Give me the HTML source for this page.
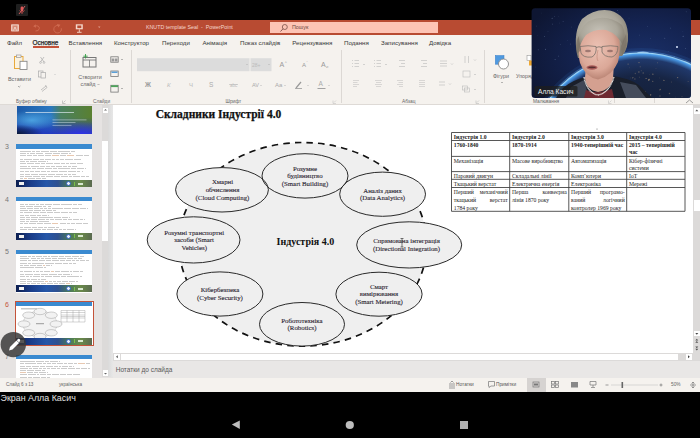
<!DOCTYPE html>
<html><head><meta charset="utf-8">
<style>
*{margin:0;padding:0;box-sizing:border-box}
html,body{width:700px;height:438px;overflow:hidden;background:#000}
body{position:relative;font-family:"Liberation Sans",sans-serif}
.a{position:absolute;white-space:nowrap}
.sans{font-family:"Liberation Sans",sans-serif}
.serif{font-family:"Liberation Serif",serif}
.tab{position:absolute;top:39px;font-size:6.15px;color:#383838;line-height:7px}
.lbl{position:absolute;top:99px;font-size:4.8px;color:#666;line-height:6px}
.rt{position:absolute;font-size:5.4px;color:#666;line-height:6px;text-align:center}
.sep{position:absolute;top:50px;width:1px;height:53px;background:#dcd8d4}
.thumb{position:absolute;left:16px;width:76px;height:43px;background:#fff}
.num{position:absolute;left:5px;font-size:7px;color:#666}
.el text{font-family:"Liberation Serif",serif;font-size:6.8px;fill:#333;text-anchor:middle}
td{border:0.9px solid #555;vertical-align:top;padding:0 1.5px;font-family:"Liberation Serif",serif;font-size:5.6px;line-height:7.5px;color:#222}
</style></head>
<body>
<!-- top black bar -->
<div class="a" style="left:16px;top:4px;width:12px;height:12px;background:#1f1f1f;border-radius:1px"></div>
<svg class="a" style="left:16px;top:4px" width="12" height="12" viewBox="0 0 12 12">
  <rect x="4.6" y="2.5" width="2.8" height="5" rx="1.4" fill="#e05a5a"/>
  <path d="M3.5 6.5 Q6 10 8.5 6.5 M6 8.5 V10" stroke="#d05050" stroke-width="0.8" fill="none"/>
  <line x1="3" y1="10" x2="9" y2="2" stroke="#e06060" stroke-width="0.9"/>
</svg>

<!-- title bar -->
<div class="a" style="left:0;top:20px;width:700px;height:14.5px;background:#b84b32"></div>
<svg class="a" style="left:0;top:20px" width="140" height="15" viewBox="0 0 140 15">
  <rect x="11" y="4.3" width="8" height="7.2" rx="0.8" fill="#ecc8bc"/>
  <rect x="12.5" y="5.5" width="5" height="5" fill="#d88a74"/>
  <path d="M13.5 10.5 L15 7 L16.5 10.5" stroke="#f4e0d8" stroke-width="0.8" fill="none"/>
  <path d="M34.5 6 Q39.5 5 39.3 8.5 Q39 11.3 35.5 11" stroke="#cf6a50" stroke-width="1" fill="none"/>
  <path d="M33.2 6.3 L35.8 4.2 L36 7.8 Z" fill="#cf6a50"/>
  <path d="M58.5 5.5 A3.8 3.8 0 1 0 61.3 8.3" stroke="#cf6a50" stroke-width="1" fill="none"/>
  <path d="M57 4 L60.5 4.8 L58.3 7.5 Z" fill="#cf6a50"/>
  <rect x="75.8" y="4.3" width="7" height="5" fill="#f4d8cc"/>
  <rect x="77.3" y="5.5" width="4" height="2.6" fill="#b84b32"/>
  <path d="M79.3 9.3 V12 M77 12.3 H81.6" stroke="#f4d8cc" stroke-width="0.9"/>
  <path d="M98 6.5 L100.5 6.5 L99.25 8 Z" fill="#e0a090"/>
</svg>
<div class="a" style="left:146px;top:23.8px;font-size:5.3px;color:#f5d6cc;line-height:6px">KNUTD template Seal&nbsp; -&nbsp; PowerPoint</div>
<div class="a" style="left:270px;top:22px;width:168px;height:11.3px;background:#fdc4b5"></div>
<svg class="a" style="left:279px;top:23px" width="10" height="10" viewBox="0 0 10 10">
  <circle cx="5.8" cy="4" r="2.5" fill="none" stroke="#7a5048" stroke-width="0.8"/>
  <line x1="4" y1="5.8" x2="1.5" y2="8.5" stroke="#7a5048" stroke-width="0.9"/>
</svg>
<div class="a" style="left:292px;top:24.3px;font-size:5.4px;color:#6a4a44;line-height:7px">Пошук</div>

<!-- ribbon -->
<div class="a" style="left:0;top:34.5px;width:700px;height:70px;background:#f5f2ee;border-bottom:0.8px solid #dedad6"></div>
<div class="tab" style="left:7px">Файл</div>
<div class="tab" style="left:32.5px;color:#2a2a2a;font-size:6.4px;-webkit-text-stroke:0.25px #2a2a2a">Основне</div>
<div class="a" style="left:32.5px;top:46.3px;width:26px;height:1.4px;background:#c4533a"></div>
<div class="tab" style="left:68.6px">Вставлення</div>
<div class="tab" style="left:114px">Конструктор</div>
<div class="tab" style="left:162px">Переходи</div>
<div class="tab" style="left:202.5px">Анімація</div>
<div class="tab" style="left:240px">Показ слайдів</div>
<div class="tab" style="left:292.3px">Рецензування</div>
<div class="tab" style="left:344px">Подання</div>
<div class="tab" style="left:381px">Записування</div>
<div class="tab" style="left:429px">Довідка</div>

<div class="sep" style="left:69.5px"></div>
<div class="sep" style="left:131.4px"></div>
<div class="sep" style="left:340.7px"></div>
<div class="sep" style="left:483.5px"></div>
<div class="sep" style="left:614.3px"></div>
<div class="sep" style="left:653.7px"></div>

<svg class="a" style="left:0;top:48px" width="700" height="57" viewBox="0 48 700 57">
  <!-- paste -->
  <rect x="14.5" y="56.5" width="8.5" height="12" fill="#fbf3e0" stroke="#e8a93c" stroke-width="1"/>
  <rect x="16.5" y="55" width="4.5" height="2.5" fill="#f5f2ee" stroke="#999" stroke-width="0.7"/>
  <rect x="20" y="61.3" width="7" height="8.2" fill="#fff" stroke="#888" stroke-width="0.9"/>
  <path d="M18 86 L19.2 87.2 L20.4 86" stroke="#888" stroke-width="0.7" fill="none"/>
  <!-- cut -->
  <path d="M40.5 57 L44 62 M44 57 L40.5 62" stroke="#aaa" stroke-width="0.7"/>
  <circle cx="40.5" cy="62.5" r="0.9" fill="none" stroke="#aaa" stroke-width="0.6"/>
  <circle cx="44" cy="62.5" r="0.9" fill="none" stroke="#aaa" stroke-width="0.6"/>
  <!-- copy -->
  <rect x="38.5" y="71" width="4.5" height="6" fill="none" stroke="#aaa" stroke-width="0.7"/>
  <rect x="41" y="72.5" width="4.5" height="5.5" fill="#f5f2ee" stroke="#aaa" stroke-width="0.7"/>
  <path d="M54 74 L55 75 L56 74" stroke="#ccc" stroke-width="0.6" fill="none"/>
  <!-- painter -->
  <path d="M41 90 L46 86 M42 91.5 L47 87.5 L45.5 85" stroke="#aaa" stroke-width="0.7" fill="none"/>
  <!-- launcher -->
  <path d="M62.5 100.5 V103.5 H65.5 M63.5 102.5 L65.5 100.5" stroke="#999" stroke-width="0.5" fill="none"/>
  <!-- new slide -->
  <rect x="83" y="57.5" width="13" height="9.5" fill="none" stroke="#777" stroke-width="1"/>
  <line x1="83" y1="60" x2="96" y2="60" stroke="#777" stroke-width="0.9"/>
  <line x1="89.5" y1="60" x2="89.5" y2="67" stroke="#777" stroke-width="0.8"/>
  <path d="M85.5 54 V58.5 M83.3 56.2 H87.7" stroke="#39a04a" stroke-width="0.9"/>
  <path d="M97.5 84 L98.5 85 L99.5 84" stroke="#888" stroke-width="0.6" fill="none"/>
  <!-- layout -->
  <rect x="110.8" y="56.8" width="7.4" height="5.4" fill="none" stroke="#777" stroke-width="0.8"/>
  <rect x="111.6" y="58.5" width="2.8" height="3" fill="#999"/><rect x="115" y="58.5" width="2.5" height="3" fill="#999"/>
  <path d="M121 59 L122 60 L123 59" stroke="#888" stroke-width="0.6" fill="none"/>
  <!-- reset -->
  <rect x="110.8" y="71" width="7.4" height="5.4" fill="none" stroke="#777" stroke-width="0.8"/>
  <rect x="111.5" y="71.5" width="6" height="1.5" fill="#5aa0d8"/>
  <!-- section -->
  <rect x="110.8" y="85.3" width="7.4" height="6.8" fill="none" stroke="#777" stroke-width="0.8"/>
  <rect x="111" y="85.3" width="7" height="1.8" fill="#4da35a"/>
  <path d="M121 88 L122 89 L123 88" stroke="#888" stroke-width="0.6" fill="none"/>
  <!-- font box -->
  <rect x="137" y="58.2" width="112.5" height="13" fill="#dcdcdc"/>
  <rect x="250.5" y="58.2" width="21" height="13" fill="#dcdcdc"/>
  <path d="M246 64 L247 65 L248 64 M268 64 L269 65 L270 64" stroke="#bbb" stroke-width="0.6" fill="none"/>
  <text x="252" y="66.5" font-size="5" fill="#bbb" font-family="Liberation Sans">28+</text>
  <g font-family="Liberation Sans" fill="#999">
  <text x="279.5" y="67" font-size="7">A</text><text x="285" y="63.5" font-size="3.5">^</text>
  <text x="302" y="67" font-size="6">A</text><text x="306.5" y="63.5" font-size="3.5">ˇ</text>
  <text x="321" y="67" font-size="7">A</text><text x="325.5" y="68" font-size="5">ℴ</text>
  <text x="145" y="86.5" font-size="6.5" font-weight="bold" fill="#999">Ж</text>
  <text x="167" y="86.5" font-size="6" font-style="italic" fill="#bbb">К</text>
  <text x="189" y="86.5" font-size="6" fill="#bbb">Ч</text>
  <text x="209" y="86.5" font-size="6.5" fill="#aaa">S</text>
  <text x="230" y="86.5" font-size="4.5" fill="#bbb">abc</text>
  <text x="252" y="86.5" font-size="5.5" fill="#aaa">AV</text>
  <text x="275" y="87" font-size="6" fill="#aaa">Aa</text>
  <text x="318.5" y="86" font-size="6.5" fill="#aaa">A</text>
  </g>
  <line x1="229" y1="84.5" x2="238" y2="84.5" stroke="#bbb" stroke-width="0.6"/>
  <path d="M296 88 L301 82" stroke="#999" stroke-width="1.2"/>
  <line x1="295" y1="88.5" x2="302" y2="88.5" stroke="#999" stroke-width="0.8"/>
  <line x1="317.5" y1="88.5" x2="325.5" y2="88.5" stroke="#999" stroke-width="0.9"/>
  <path d="M260 85 L261 86 L262 85 M284 85 L285 86 L286 85 M307 85 L308 86 L309 85 M328 85 L329 86 L330 85" stroke="#bbb" stroke-width="0.5" fill="none"/>
  <path d="M333 100.5 V103.5 H336 M334 102.5 L336 100.5" stroke="#bbb" stroke-width="0.5" fill="none"/>
  <!-- paragraph -->
  <g stroke="#bbb" stroke-width="0.6" fill="none">
   <path d="M352 60.5h1 M354.5 60.5h4.5 M352 63.5h1 M354.5 63.5h4.5 M352 66.5h1 M354.5 66.5h4.5"/>
   <path d="M374 60.5h1 M376.5 60.5h4.5 M374 63.5h1 M376.5 63.5h4.5 M374 66.5h1 M376.5 66.5h4.5"/>
   <path d="M399 60.5h6 M401 63.5h4 M399 66.5h6"/>
   <path d="M421 60.5h6 M423 63.5h4 M421 66.5h6"/>
   <path d="M353 80.5h6 M353 82.5h4.5 M353 84.5h6 M353 86.5h4" stroke-width="0.5"/>
   <path d="M375 80.5h7 M376 82.5h5 M375 84.5h7 M376 86.5h5" stroke-width="0.5"/>
   <path d="M397 80.5h6 M398.5 82.5h4.5 M397 84.5h6 M399 86.5h4" stroke-width="0.5"/>
   <path d="M419 80.5h6 M419 82.5h6 M419 84.5h6 M419 86.5h6" stroke-width="0.5"/>
   <path d="M363 64 l1 1 l1 -1 M385 64 l1 1 l1 -1"/>
   <path d="M440 61h7 M440 63.5h7 M440 66h7 M451 63.5 l1 1 l1 -1"/>
   <path d="M439 82h6 M439 85h6 M449 83.5 l1 1 l1 -1"/>
   <path d="M465 56v7 M468.5 56v7 M474 59.5 l1 1 l1 -1"/>
   <rect x="463" y="71" width="7" height="6"/><path d="M474 74 l1 1 l1 -1"/>
   <rect x="462.5" y="86" width="5" height="4"/><rect x="464.5" y="88" width="5" height="4"/><path d="M474 89 l1 1 l1 -1"/>
   <path d="M476 100.5 V103.5 H479 M477 102.5 L479 100.5"/>
  </g>
  <!-- shapes -->
  <rect x="495.3" y="55.5" width="8.7" height="8.7" fill="#4f9ae0" stroke="#3a7fc8" stroke-width="0.5"/>
  <circle cx="503.5" cy="64" r="5" fill="#fff" stroke="#888" stroke-width="0.9"/>
  <path d="M501 82 L502 83 L503 82" stroke="#888" stroke-width="0.6" fill="none"/>
  <rect x="527" y="55.5" width="4" height="5" fill="#fff" stroke="#999" stroke-width="0.6"/>
  <rect x="529" y="60.5" width="3" height="5" fill="#f0a830"/>
  <path d="M608.5 100.5 V103.5 H611.5 M609.5 102.5 L611.5 100.5" stroke="#bbb" stroke-width="0.5" fill="none"/>
  <path d="M686 103 L689.5 100 L693 103" stroke="#777" stroke-width="0.7" fill="none"/>
</svg>
<div class="rt" style="left:8px;top:76px;width:23px;text-align:left">Вставити</div>
<div class="rt" style="left:76px;top:73.5px;width:28px">Створити</div>
<div class="rt" style="left:76px;top:80.5px;width:24px">слайд</div>
<div class="rt" style="left:493px;top:72.5px;width:17px;text-align:left">Фігури</div>
<div class="rt" style="left:516px;top:72.5px;text-align:left">Упорядкувати</div>
<div class="lbl" style="left:16px">Буфер обміну</div>
<div class="lbl" style="left:93px">Слайди</div>
<div class="lbl" style="left:225.5px">Шрифт</div>
<div class="lbl" style="left:402px">Абзац</div>
<div class="lbl" style="left:533px">Малювання</div>

<!-- left thumbnail panel -->
<div class="a" style="left:0;top:104.5px;width:113px;height:273px;background:#e6e3e2"></div>
<div class="a" style="left:101.5px;top:105px;width:7.5px;height:272px;background:#dcdad9"></div>
<div class="a" style="left:103px;top:107.5px;width:5px;height:5px;background:#fff"></div>
<div class="a" style="left:101.5px;top:141px;width:6.5px;height:99.5px;background:#fff"></div>
<div class="a" style="left:103px;top:370px;width:5px;height:6px;background:#fff"></div>
<svg class="a" style="left:101px;top:105px" width="8" height="272" viewBox="0 0 8 272">
  <path d="M3 5.5 L4.5 4 L6 5.5Z" fill="#666"/>
  <path d="M3 268 L4.5 269.5 L6 268Z" fill="#666"/>
</svg>
<div class="a" style="left:108px;top:105px;width:5.5px;height:272px;background:linear-gradient(90deg,#dadada,#e2e2e2 50%,#e9e9e9)"></div>

<!-- thumbnail 2 (partial) -->
<svg class="a" style="left:16.5px;top:106px" width="75.2" height="28.4" viewBox="0 0 75.2 29.4" preserveAspectRatio="none">
<defs>
<linearGradient id="t2a" x1="0" y1="0" x2="1" y2="0"><stop offset="0" stop-color="#1c5aa8"/><stop offset="0.45" stop-color="#2a78c0"/><stop offset="0.58" stop-color="#4a8060"/><stop offset="1" stop-color="#5a8030"/></linearGradient>
<radialGradient id="t2b" cx="0.2" cy="0.5" r="0.35"><stop offset="0" stop-color="#4aa0e0"/><stop offset="1" stop-color="#4aa0e0" stop-opacity="0"/></radialGradient>
<radialGradient id="t2c" cx="0.85" cy="1" r="0.45"><stop offset="0" stop-color="#3030e8"/><stop offset="1" stop-color="#3040d0" stop-opacity="0"/></radialGradient>
<radialGradient id="t2d" cx="0" cy="1" r="0.35"><stop offset="0" stop-color="#081830"/><stop offset="1" stop-color="#081830" stop-opacity="0"/></radialGradient>
<linearGradient id="t2e" x1="0" y1="0" x2="0" y2="1"><stop offset="0.4" stop-color="#2030b0" stop-opacity="0"/><stop offset="1" stop-color="#2030c0" stop-opacity="0.9"/></linearGradient>
</defs>
<rect width="75.2" height="29.4" fill="url(#t2a)"/>
<rect width="75.2" height="29.4" fill="url(#t2e)"/>
<rect width="75.2" height="29.4" fill="url(#t2b)"/>
<rect width="75.2" height="29.4" fill="url(#t2c)"/>
<rect width="75.2" height="29.4" fill="url(#t2d)"/>
<rect x="8.5" y="6.2" width="48.5" height="0.9" fill="#e8f0f8" opacity="0.75"/>
<rect x="35.5" y="14" width="34" height="0.8" fill="#e8f0f8" opacity="0.6"/>
<rect x="35.5" y="16.8" width="23" height="0.8" fill="#e8f0f8" opacity="0.55"/>
<rect x="35.5" y="19.6" width="19" height="0.8" fill="#e8f0f8" opacity="0.55"/>
</svg>
<div class="a" style="left:0;top:104.5px;width:101px;height:273px;overflow:hidden"><div class="a" style="left:0;top:-104.5px;width:101px;height:480px">
<div class="num" style="top:142.9px;color:#777">3</div>
<div class="a" style="left:16.2px;top:144.4px;width:75.8px;height:43px;background:#fff"></div>
<div class="a" style="left:16.2px;top:144.4px;width:75.8px;height:4.3px;background:#3a8ad0"></div>
<div class="a" style="left:20.0px;top:150.9px;width:4.5px;height:1px;background:#cacaca"></div>
<div class="a" style="left:25.4px;top:150.9px;width:5.9px;height:1px;background:#cacaca"></div>
<div class="a" style="left:32.3px;top:150.9px;width:2.6px;height:1px;background:#cacaca"></div>
<div class="a" style="left:35.7px;top:150.9px;width:3.9px;height:1px;background:#cacaca"></div>
<div class="a" style="left:40.6px;top:150.9px;width:8.0px;height:1px;background:#cacaca"></div>
<div class="a" style="left:49.5px;top:150.9px;width:7.1px;height:1px;background:#cacaca"></div>
<div class="a" style="left:57.5px;top:150.9px;width:6.0px;height:1px;background:#cacaca"></div>
<div class="a" style="left:64.4px;top:150.9px;width:6.0px;height:1px;background:#cacaca"></div>
<div class="a" style="left:71.3px;top:150.9px;width:3.5px;height:1px;background:#cacaca"></div>
<div class="a" style="left:20.0px;top:153.1px;width:5.8px;height:1px;background:#cacaca"></div>
<div class="a" style="left:26.7px;top:153.1px;width:2.7px;height:1px;background:#cacaca"></div>
<div class="a" style="left:30.2px;top:153.1px;width:5.1px;height:1px;background:#cacaca"></div>
<div class="a" style="left:36.2px;top:153.1px;width:7.3px;height:1px;background:#cacaca"></div>
<div class="a" style="left:44.5px;top:153.1px;width:7.6px;height:1px;background:#cacaca"></div>
<div class="a" style="left:52.9px;top:153.1px;width:6.9px;height:1px;background:#cacaca"></div>
<div class="a" style="left:60.7px;top:153.1px;width:7.6px;height:1px;background:#cacaca"></div>
<div class="a" style="left:69.3px;top:153.1px;width:2.0px;height:1px;background:#cacaca"></div>
<div class="a" style="left:20.0px;top:155.3px;width:5.9px;height:1px;background:#cacaca"></div>
<div class="a" style="left:26.8px;top:155.3px;width:5.3px;height:1px;background:#cacaca"></div>
<div class="a" style="left:33.0px;top:155.3px;width:4.4px;height:1px;background:#cacaca"></div>
<div class="a" style="left:38.4px;top:155.3px;width:5.7px;height:1px;background:#cacaca"></div>
<div class="a" style="left:45.0px;top:155.3px;width:6.3px;height:1px;background:#cacaca"></div>
<div class="a" style="left:52.1px;top:155.3px;width:7.2px;height:1px;background:#e8c8b0"></div>
<div class="a" style="left:60.2px;top:155.3px;width:6.2px;height:1px;background:#cacaca"></div>
<div class="a" style="left:67.3px;top:155.3px;width:7.2px;height:1px;background:#e8c8b0"></div>
<div class="a" style="left:75.5px;top:155.3px;width:7.5px;height:1px;background:#cacaca"></div>
<div class="a" style="left:83.8px;top:155.3px;width:5.5px;height:1px;background:#cacaca"></div>
<div class="a" style="left:20.0px;top:158.9px;width:2.8px;height:1px;background:#cacaca"></div>
<div class="a" style="left:23.7px;top:158.9px;width:7.9px;height:1px;background:#cacaca"></div>
<div class="a" style="left:32.6px;top:158.9px;width:6.9px;height:1px;background:#cacaca"></div>
<div class="a" style="left:40.4px;top:158.9px;width:3.3px;height:1px;background:#cacaca"></div>
<div class="a" style="left:44.6px;top:158.9px;width:6.7px;height:1px;background:#cacaca"></div>
<div class="a" style="left:52.3px;top:158.9px;width:2.7px;height:1px;background:#cacaca"></div>
<div class="a" style="left:55.9px;top:158.9px;width:2.7px;height:1px;background:#cacaca"></div>
<div class="a" style="left:59.5px;top:158.9px;width:4.3px;height:1px;background:#cacaca"></div>
<div class="a" style="left:64.8px;top:158.9px;width:7.9px;height:1px;background:#cacaca"></div>
<div class="a" style="left:73.6px;top:158.9px;width:7.9px;height:1px;background:#cacaca"></div>
<div class="a" style="left:20.0px;top:161.1px;width:4.7px;height:1px;background:#cacaca"></div>
<div class="a" style="left:25.6px;top:161.1px;width:3.4px;height:1px;background:#cacaca"></div>
<div class="a" style="left:29.9px;top:161.1px;width:7.3px;height:1px;background:#cacaca"></div>
<div class="a" style="left:38.1px;top:161.1px;width:7.8px;height:1px;background:#cacaca"></div>
<div class="a" style="left:46.7px;top:161.1px;width:1.2px;height:1px;background:#cacaca"></div>
<div class="a" style="left:20.0px;top:163.3px;width:5.6px;height:1px;background:#cacaca"></div>
<div class="a" style="left:26.5px;top:163.3px;width:7.7px;height:1px;background:#cacaca"></div>
<div class="a" style="left:35.0px;top:163.3px;width:4.9px;height:1px;background:#cacaca"></div>
<div class="a" style="left:40.8px;top:163.3px;width:3.8px;height:1px;background:#cacaca"></div>
<div class="a" style="left:45.5px;top:163.3px;width:7.9px;height:1px;background:#cacaca"></div>
<div class="a" style="left:54.3px;top:163.3px;width:5.5px;height:1px;background:#cacaca"></div>
<div class="a" style="left:60.7px;top:163.3px;width:4.8px;height:1px;background:#cacaca"></div>
<div class="a" style="left:66.4px;top:163.3px;width:2.6px;height:1px;background:#cacaca"></div>
<div class="a" style="left:69.9px;top:163.3px;width:6.0px;height:1px;background:#cacaca"></div>
<div class="a" style="left:76.8px;top:163.3px;width:6.0px;height:1px;background:#cacaca"></div>
<div class="a" style="left:20.0px;top:165.5px;width:6.6px;height:1px;background:#cacaca"></div>
<div class="a" style="left:27.5px;top:165.5px;width:2.8px;height:1px;background:#cacaca"></div>
<div class="a" style="left:31.2px;top:165.5px;width:7.8px;height:1px;background:#cacaca"></div>
<div class="a" style="left:39.9px;top:165.5px;width:5.0px;height:1px;background:#cacaca"></div>
<div class="a" style="left:45.8px;top:165.5px;width:4.3px;height:1px;background:#cacaca"></div>
<div class="a" style="left:51.0px;top:165.5px;width:4.2px;height:1px;background:#cacaca"></div>
<div class="a" style="left:56.1px;top:165.5px;width:5.8px;height:1px;background:#cacaca"></div>
<div class="a" style="left:62.8px;top:165.5px;width:4.6px;height:1px;background:#cacaca"></div>
<div class="a" style="left:68.2px;top:165.5px;width:2.6px;height:1px;background:#cacaca"></div>
<div class="a" style="left:71.8px;top:165.5px;width:5.3px;height:1px;background:#cacaca"></div>
<div class="a" style="left:20.0px;top:167.7px;width:3.5px;height:1px;background:#cacaca"></div>
<div class="a" style="left:24.4px;top:167.7px;width:6.3px;height:1px;background:#cacaca"></div>
<div class="a" style="left:31.7px;top:167.7px;width:4.3px;height:1px;background:#cacaca"></div>
<div class="a" style="left:36.8px;top:167.7px;width:7.1px;height:1px;background:#cacaca"></div>
<div class="a" style="left:44.8px;top:167.7px;width:7.2px;height:1px;background:#cacaca"></div>
<div class="a" style="left:52.9px;top:167.7px;width:4.4px;height:1px;background:#cacaca"></div>
<div class="a" style="left:58.2px;top:167.7px;width:7.4px;height:1px;background:#cacaca"></div>
<div class="a" style="left:66.4px;top:167.7px;width:3.7px;height:1px;background:#cacaca"></div>
<div class="a" style="left:71.1px;top:167.7px;width:5.4px;height:1px;background:#cacaca"></div>
<div class="a" style="left:77.4px;top:167.7px;width:6.9px;height:1px;background:#cacaca"></div>
<div class="a" style="left:85.2px;top:167.7px;width:0.8px;height:1px;background:#cacaca"></div>
<div class="a" style="left:20.0px;top:171.3px;width:4.4px;height:1px;background:#cacaca"></div>
<div class="a" style="left:25.3px;top:171.3px;width:4.1px;height:1px;background:#cacaca"></div>
<div class="a" style="left:30.3px;top:171.3px;width:4.0px;height:1px;background:#cacaca"></div>
<div class="a" style="left:35.2px;top:171.3px;width:4.8px;height:1px;background:#cacaca"></div>
<div class="a" style="left:40.9px;top:171.3px;width:4.8px;height:1px;background:#cacaca"></div>
<div class="a" style="left:46.5px;top:171.3px;width:3.4px;height:1px;background:#cacaca"></div>
<div class="a" style="left:50.8px;top:171.3px;width:7.7px;height:1px;background:#cacaca"></div>
<div class="a" style="left:59.4px;top:171.3px;width:7.9px;height:1px;background:#cacaca"></div>
<div class="a" style="left:68.2px;top:171.3px;width:7.7px;height:1px;background:#cacaca"></div>
<div class="a" style="left:76.8px;top:171.3px;width:3.7px;height:1px;background:#cacaca"></div>
<div class="a" style="left:81.5px;top:171.3px;width:1.4px;height:1px;background:#cacaca"></div>
<div class="a" style="left:20.0px;top:173.5px;width:3.8px;height:1px;background:#cacaca"></div>
<div class="a" style="left:24.7px;top:173.5px;width:5.7px;height:1px;background:#cacaca"></div>
<div class="a" style="left:31.3px;top:173.5px;width:7.0px;height:1px;background:#cacaca"></div>
<div class="a" style="left:39.1px;top:173.5px;width:7.5px;height:1px;background:#cacaca"></div>
<div class="a" style="left:47.5px;top:173.5px;width:7.6px;height:1px;background:#cacaca"></div>
<div class="a" style="left:56.0px;top:173.5px;width:7.4px;height:1px;background:#cacaca"></div>
<div class="a" style="left:64.3px;top:173.5px;width:2.6px;height:1px;background:#cacaca"></div>
<div class="a" style="left:67.8px;top:173.5px;width:3.4px;height:1px;background:#cacaca"></div>
<div class="a" style="left:72.2px;top:173.5px;width:3.6px;height:1px;background:#cacaca"></div>
<div class="a" style="left:20.0px;top:175.7px;width:4.4px;height:1px;background:#cacaca"></div>
<div class="a" style="left:25.3px;top:175.7px;width:7.2px;height:1px;background:#cacaca"></div>
<div class="a" style="left:33.4px;top:175.7px;width:6.8px;height:1px;background:#cacaca"></div>
<div class="a" style="left:41.1px;top:175.7px;width:3.6px;height:1px;background:#cacaca"></div>
<div class="a" style="left:45.6px;top:175.7px;width:7.0px;height:1px;background:#cacaca"></div>
<div class="a" style="left:53.5px;top:175.7px;width:6.9px;height:1px;background:#cacaca"></div>
<div class="a" style="left:61.3px;top:175.7px;width:6.9px;height:1px;background:#cacaca"></div>
<div class="a" style="left:69.1px;top:175.7px;width:2.5px;height:1px;background:#cacaca"></div>
<div class="a" style="left:72.5px;top:175.7px;width:7.2px;height:1px;background:#cacaca"></div>
<div class="a" style="left:80.7px;top:175.7px;width:4.0px;height:1px;background:#cacaca"></div>
<div class="a" style="left:85.6px;top:175.7px;width:3.2px;height:1px;background:#cacaca"></div>
<div class="a" style="left:20.0px;top:177.9px;width:3.2px;height:1px;background:#cacaca"></div>
<div class="a" style="left:24.1px;top:177.9px;width:2.9px;height:1px;background:#e8c8b0"></div>
<div class="a" style="left:27.9px;top:177.9px;width:7.2px;height:1px;background:#cacaca"></div>
<div class="a" style="left:36.0px;top:177.9px;width:5.3px;height:1px;background:#cacaca"></div>
<div class="a" style="left:42.1px;top:177.9px;width:3.7px;height:1px;background:#cacaca"></div>
<div class="a" style="left:16.2px;top:180.2px;width:75.8px;height:7.2px;background:linear-gradient(90deg,#0d1f50 0%,#1a3d8a 20%,#2556a8 40%,#2e5090 55%,#4a7a5a 70%,#6a8a4a 85%,#5a6a50 100%)"></div><div class="a" style="left:18.5px;top:182.2px;width:5.5px;height:3px;background:#f0f0f0"></div><div class="a" style="left:66px;top:181.2px;width:5px;height:5px;border-radius:50%;background:#e8eef8;border:1px solid #3060c0"></div><div class="a" style="left:73.5px;top:181.7px;width:1.5px;height:4px;background:#7ac04a"></div><div class="a" style="left:78px;top:182.7px;width:5px;height:2px;background:#d8e8d0"></div>
<div class="num" style="top:195.5px;color:#777">4</div>
<div class="a" style="left:16.2px;top:197.0px;width:75.8px;height:43px;background:#fff"></div>
<div class="a" style="left:16.2px;top:197.0px;width:75.8px;height:4.3px;background:#3a8ad0"></div>
<div class="a" style="left:20.0px;top:203.5px;width:3.6px;height:1px;background:#cacaca"></div>
<div class="a" style="left:24.5px;top:203.5px;width:3.2px;height:1px;background:#cacaca"></div>
<div class="a" style="left:28.5px;top:203.5px;width:6.4px;height:1px;background:#cacaca"></div>
<div class="a" style="left:35.9px;top:203.5px;width:2.9px;height:1px;background:#cacaca"></div>
<div class="a" style="left:39.7px;top:203.5px;width:4.6px;height:1px;background:#cacaca"></div>
<div class="a" style="left:45.2px;top:203.5px;width:6.8px;height:1px;background:#cacaca"></div>
<div class="a" style="left:52.9px;top:203.5px;width:6.9px;height:1px;background:#cacaca"></div>
<div class="a" style="left:60.7px;top:203.5px;width:4.9px;height:1px;background:#cacaca"></div>
<div class="a" style="left:66.4px;top:203.5px;width:5.2px;height:1px;background:#cacaca"></div>
<div class="a" style="left:72.6px;top:203.5px;width:4.8px;height:1px;background:#cacaca"></div>
<div class="a" style="left:78.3px;top:203.5px;width:3.4px;height:1px;background:#cacaca"></div>
<div class="a" style="left:20.0px;top:205.7px;width:4.8px;height:1px;background:#cacaca"></div>
<div class="a" style="left:25.7px;top:205.7px;width:7.7px;height:1px;background:#cacaca"></div>
<div class="a" style="left:34.3px;top:205.7px;width:7.4px;height:1px;background:#cacaca"></div>
<div class="a" style="left:42.6px;top:205.7px;width:3.9px;height:1px;background:#cacaca"></div>
<div class="a" style="left:47.5px;top:205.7px;width:3.2px;height:1px;background:#cacaca"></div>
<div class="a" style="left:20.0px;top:207.9px;width:6.2px;height:1px;background:#cacaca"></div>
<div class="a" style="left:27.1px;top:207.9px;width:5.6px;height:1px;background:#cacaca"></div>
<div class="a" style="left:33.6px;top:207.9px;width:5.7px;height:1px;background:#cacaca"></div>
<div class="a" style="left:40.2px;top:207.9px;width:3.3px;height:1px;background:#cacaca"></div>
<div class="a" style="left:44.4px;top:207.9px;width:2.7px;height:1px;background:#cacaca"></div>
<div class="a" style="left:48.0px;top:207.9px;width:3.0px;height:1px;background:#cacaca"></div>
<div class="a" style="left:52.0px;top:207.9px;width:3.5px;height:1px;background:#cacaca"></div>
<div class="a" style="left:56.4px;top:207.9px;width:7.1px;height:1px;background:#cacaca"></div>
<div class="a" style="left:64.4px;top:207.9px;width:7.1px;height:1px;background:#cacaca"></div>
<div class="a" style="left:72.4px;top:207.9px;width:7.1px;height:1px;background:#cacaca"></div>
<div class="a" style="left:80.4px;top:207.9px;width:5.7px;height:1px;background:#cacaca"></div>
<div class="a" style="left:87.0px;top:207.9px;width:0.7px;height:1px;background:#cacaca"></div>
<div class="a" style="left:20.0px;top:210.1px;width:7.6px;height:1px;background:#cacaca"></div>
<div class="a" style="left:28.5px;top:210.1px;width:4.3px;height:1px;background:#cacaca"></div>
<div class="a" style="left:33.7px;top:210.1px;width:7.1px;height:1px;background:#cacaca"></div>
<div class="a" style="left:41.7px;top:210.1px;width:3.5px;height:1px;background:#cacaca"></div>
<div class="a" style="left:46.1px;top:210.1px;width:5.9px;height:1px;background:#cacaca"></div>
<div class="a" style="left:52.9px;top:210.1px;width:3.4px;height:1px;background:#cacaca"></div>
<div class="a" style="left:20.0px;top:212.3px;width:3.0px;height:1px;background:#cacaca"></div>
<div class="a" style="left:23.9px;top:212.3px;width:7.9px;height:1px;background:#cacaca"></div>
<div class="a" style="left:32.6px;top:212.3px;width:6.6px;height:1px;background:#cacaca"></div>
<div class="a" style="left:40.1px;top:212.3px;width:6.3px;height:1px;background:#cacaca"></div>
<div class="a" style="left:47.3px;top:212.3px;width:6.2px;height:1px;background:#cacaca"></div>
<div class="a" style="left:54.4px;top:212.3px;width:5.2px;height:1px;background:#cacaca"></div>
<div class="a" style="left:60.5px;top:212.3px;width:7.4px;height:1px;background:#cacaca"></div>
<div class="a" style="left:68.8px;top:212.3px;width:3.0px;height:1px;background:#cacaca"></div>
<div class="a" style="left:72.7px;top:212.3px;width:4.3px;height:1px;background:#cacaca"></div>
<div class="a" style="left:20.0px;top:214.5px;width:3.6px;height:1px;background:#cacaca"></div>
<div class="a" style="left:24.5px;top:214.5px;width:4.2px;height:1px;background:#cacaca"></div>
<div class="a" style="left:29.6px;top:214.5px;width:6.3px;height:1px;background:#cacaca"></div>
<div class="a" style="left:36.8px;top:214.5px;width:4.1px;height:1px;background:#cacaca"></div>
<div class="a" style="left:41.9px;top:214.5px;width:4.8px;height:1px;background:#cacaca"></div>
<div class="a" style="left:47.5px;top:214.5px;width:1.5px;height:1px;background:#cacaca"></div>
<div class="a" style="left:20.0px;top:216.7px;width:4.6px;height:1px;background:#cacaca"></div>
<div class="a" style="left:25.5px;top:216.7px;width:4.5px;height:1px;background:#cacaca"></div>
<div class="a" style="left:30.9px;top:216.7px;width:6.8px;height:1px;background:#cacaca"></div>
<div class="a" style="left:38.5px;top:216.7px;width:8.0px;height:1px;background:#cacaca"></div>
<div class="a" style="left:47.4px;top:216.7px;width:5.8px;height:1px;background:#cacaca"></div>
<div class="a" style="left:54.1px;top:216.7px;width:7.1px;height:1px;background:#cacaca"></div>
<div class="a" style="left:62.1px;top:216.7px;width:5.6px;height:1px;background:#cacaca"></div>
<div class="a" style="left:68.5px;top:216.7px;width:1.9px;height:1px;background:#cacaca"></div>
<div class="a" style="left:20.0px;top:218.9px;width:5.1px;height:1px;background:#cacaca"></div>
<div class="a" style="left:26.0px;top:218.9px;width:3.8px;height:1px;background:#cacaca"></div>
<div class="a" style="left:30.7px;top:218.9px;width:6.2px;height:1px;background:#cacaca"></div>
<div class="a" style="left:37.8px;top:218.9px;width:7.2px;height:1px;background:#cacaca"></div>
<div class="a" style="left:45.9px;top:218.9px;width:3.5px;height:1px;background:#cacaca"></div>
<div class="a" style="left:50.3px;top:218.9px;width:3.5px;height:1px;background:#cacaca"></div>
<div class="a" style="left:54.7px;top:218.9px;width:7.2px;height:1px;background:#cacaca"></div>
<div class="a" style="left:62.9px;top:218.9px;width:3.9px;height:1px;background:#cacaca"></div>
<div class="a" style="left:67.7px;top:218.9px;width:4.2px;height:1px;background:#cacaca"></div>
<div class="a" style="left:72.8px;top:218.9px;width:6.5px;height:1px;background:#cacaca"></div>
<div class="a" style="left:80.2px;top:218.9px;width:3.0px;height:1px;background:#cacaca"></div>
<div class="a" style="left:84.1px;top:218.9px;width:0.6px;height:1px;background:#cacaca"></div>
<div class="a" style="left:20.0px;top:221.1px;width:4.9px;height:1px;background:#cacaca"></div>
<div class="a" style="left:25.8px;top:221.1px;width:3.7px;height:1px;background:#cacaca"></div>
<div class="a" style="left:30.4px;top:221.1px;width:7.8px;height:1px;background:#cacaca"></div>
<div class="a" style="left:39.0px;top:221.1px;width:5.5px;height:1px;background:#cacaca"></div>
<div class="a" style="left:45.4px;top:221.1px;width:4.0px;height:1px;background:#cacaca"></div>
<div class="a" style="left:20.0px;top:223.3px;width:3.0px;height:1px;background:#cacaca"></div>
<div class="a" style="left:23.9px;top:223.3px;width:4.6px;height:1px;background:#cacaca"></div>
<div class="a" style="left:29.4px;top:223.3px;width:6.7px;height:1px;background:#cacaca"></div>
<div class="a" style="left:37.0px;top:223.3px;width:6.2px;height:1px;background:#cacaca"></div>
<div class="a" style="left:44.1px;top:223.3px;width:6.9px;height:1px;background:#cacaca"></div>
<div class="a" style="left:51.9px;top:223.3px;width:6.6px;height:1px;background:#e8c8b0"></div>
<div class="a" style="left:59.5px;top:223.3px;width:6.2px;height:1px;background:#cacaca"></div>
<div class="a" style="left:66.6px;top:223.3px;width:3.1px;height:1px;background:#cacaca"></div>
<div class="a" style="left:70.6px;top:223.3px;width:4.4px;height:1px;background:#cacaca"></div>
<div class="a" style="left:75.9px;top:223.3px;width:6.2px;height:1px;background:#cacaca"></div>
<div class="a" style="left:83.0px;top:223.3px;width:3.5px;height:1px;background:#cacaca"></div>
<div class="a" style="left:87.4px;top:223.3px;width:0.3px;height:1px;background:#cacaca"></div>
<div class="a" style="left:20.0px;top:226.9px;width:3.3px;height:1px;background:#cacaca"></div>
<div class="a" style="left:24.2px;top:226.9px;width:6.5px;height:1px;background:#cacaca"></div>
<div class="a" style="left:31.5px;top:226.9px;width:5.6px;height:1px;background:#cacaca"></div>
<div class="a" style="left:38.0px;top:226.9px;width:5.0px;height:1px;background:#cacaca"></div>
<div class="a" style="left:43.9px;top:226.9px;width:3.5px;height:1px;background:#cacaca"></div>
<div class="a" style="left:48.3px;top:226.9px;width:6.4px;height:1px;background:#cacaca"></div>
<div class="a" style="left:55.6px;top:226.9px;width:3.4px;height:1px;background:#cacaca"></div>
<div class="a" style="left:20.0px;top:229.1px;width:7.3px;height:1px;background:#cacaca"></div>
<div class="a" style="left:28.2px;top:229.1px;width:5.3px;height:1px;background:#cacaca"></div>
<div class="a" style="left:34.4px;top:229.1px;width:6.7px;height:1px;background:#cacaca"></div>
<div class="a" style="left:42.0px;top:229.1px;width:4.3px;height:1px;background:#cacaca"></div>
<div class="a" style="left:47.2px;top:229.1px;width:5.5px;height:1px;background:#cacaca"></div>
<div class="a" style="left:53.6px;top:229.1px;width:4.4px;height:1px;background:#cacaca"></div>
<div class="a" style="left:59.0px;top:229.1px;width:3.1px;height:1px;background:#cacaca"></div>
<div class="a" style="left:63.0px;top:229.1px;width:3.0px;height:1px;background:#cacaca"></div>
<div class="a" style="left:66.9px;top:229.1px;width:6.8px;height:1px;background:#cacaca"></div>
<div class="a" style="left:74.6px;top:229.1px;width:0.7px;height:1px;background:#cacaca"></div>
<div class="a" style="left:16.2px;top:232.8px;width:75.8px;height:7.2px;background:linear-gradient(90deg,#0d1f50 0%,#1a3d8a 20%,#2556a8 40%,#2e5090 55%,#4a7a5a 70%,#6a8a4a 85%,#5a6a50 100%)"></div><div class="a" style="left:18.5px;top:234.8px;width:5.5px;height:3px;background:#f0f0f0"></div><div class="a" style="left:66px;top:233.8px;width:5px;height:5px;border-radius:50%;background:#e8eef8;border:1px solid #3060c0"></div><div class="a" style="left:73.5px;top:234.3px;width:1.5px;height:4px;background:#7ac04a"></div><div class="a" style="left:78px;top:235.3px;width:5px;height:2px;background:#d8e8d0"></div>
<div class="num" style="top:248.0px;color:#777">5</div>
<div class="a" style="left:16.2px;top:249.5px;width:75.8px;height:43px;background:#fff"></div>
<div class="a" style="left:16.2px;top:249.5px;width:75.8px;height:4.3px;background:#3a8ad0"></div>
<div class="a" style="left:20.0px;top:256.0px;width:6.6px;height:1px;background:#cacaca"></div>
<div class="a" style="left:27.5px;top:256.0px;width:3.3px;height:1px;background:#cacaca"></div>
<div class="a" style="left:31.7px;top:256.0px;width:3.6px;height:1px;background:#cacaca"></div>
<div class="a" style="left:36.2px;top:256.0px;width:5.6px;height:1px;background:#cacaca"></div>
<div class="a" style="left:42.7px;top:256.0px;width:3.9px;height:1px;background:#cacaca"></div>
<div class="a" style="left:47.5px;top:256.0px;width:2.7px;height:1px;background:#cacaca"></div>
<div class="a" style="left:51.1px;top:256.0px;width:7.4px;height:1px;background:#cacaca"></div>
<div class="a" style="left:59.4px;top:256.0px;width:4.6px;height:1px;background:#cacaca"></div>
<div class="a" style="left:64.9px;top:256.0px;width:5.7px;height:1px;background:#cacaca"></div>
<div class="a" style="left:71.5px;top:256.0px;width:7.9px;height:1px;background:#cacaca"></div>
<div class="a" style="left:80.2px;top:256.0px;width:4.1px;height:1px;background:#cacaca"></div>
<div class="a" style="left:20.0px;top:258.2px;width:2.5px;height:1px;background:#cacaca"></div>
<div class="a" style="left:23.4px;top:258.2px;width:6.1px;height:1px;background:#cacaca"></div>
<div class="a" style="left:30.5px;top:258.2px;width:5.4px;height:1px;background:#cacaca"></div>
<div class="a" style="left:36.7px;top:258.2px;width:3.6px;height:1px;background:#cacaca"></div>
<div class="a" style="left:41.2px;top:258.2px;width:2.7px;height:1px;background:#cacaca"></div>
<div class="a" style="left:44.8px;top:258.2px;width:6.1px;height:1px;background:#cacaca"></div>
<div class="a" style="left:51.8px;top:258.2px;width:5.6px;height:1px;background:#cacaca"></div>
<div class="a" style="left:58.3px;top:258.2px;width:7.4px;height:1px;background:#cacaca"></div>
<div class="a" style="left:66.6px;top:258.2px;width:6.9px;height:1px;background:#cacaca"></div>
<div class="a" style="left:74.3px;top:258.2px;width:2.8px;height:1px;background:#cacaca"></div>
<div class="a" style="left:78.0px;top:258.2px;width:3.8px;height:1px;background:#cacaca"></div>
<div class="a" style="left:20.0px;top:260.4px;width:7.3px;height:1px;background:#cacaca"></div>
<div class="a" style="left:28.2px;top:260.4px;width:3.2px;height:1px;background:#cacaca"></div>
<div class="a" style="left:32.3px;top:260.4px;width:5.8px;height:1px;background:#cacaca"></div>
<div class="a" style="left:39.0px;top:260.4px;width:6.4px;height:1px;background:#cacaca"></div>
<div class="a" style="left:46.4px;top:260.4px;width:4.4px;height:1px;background:#cacaca"></div>
<div class="a" style="left:51.7px;top:260.4px;width:7.6px;height:1px;background:#cacaca"></div>
<div class="a" style="left:60.2px;top:260.4px;width:4.9px;height:1px;background:#cacaca"></div>
<div class="a" style="left:66.0px;top:260.4px;width:5.2px;height:1px;background:#cacaca"></div>
<div class="a" style="left:72.1px;top:260.4px;width:2.7px;height:1px;background:#cacaca"></div>
<div class="a" style="left:75.7px;top:260.4px;width:3.6px;height:1px;background:#cacaca"></div>
<div class="a" style="left:80.2px;top:260.4px;width:5.2px;height:1px;background:#cacaca"></div>
<div class="a" style="left:86.3px;top:260.4px;width:2.3px;height:1px;background:#cacaca"></div>
<div class="a" style="left:20.0px;top:262.6px;width:6.7px;height:1px;background:#cacaca"></div>
<div class="a" style="left:27.6px;top:262.6px;width:3.5px;height:1px;background:#cacaca"></div>
<div class="a" style="left:32.0px;top:262.6px;width:6.5px;height:1px;background:#cacaca"></div>
<div class="a" style="left:39.3px;top:262.6px;width:4.5px;height:1px;background:#cacaca"></div>
<div class="a" style="left:44.8px;top:262.6px;width:5.8px;height:1px;background:#cacaca"></div>
<div class="a" style="left:51.4px;top:262.6px;width:2.5px;height:1px;background:#cacaca"></div>
<div class="a" style="left:54.9px;top:262.6px;width:6.8px;height:1px;background:#cacaca"></div>
<div class="a" style="left:62.6px;top:262.6px;width:5.0px;height:1px;background:#cacaca"></div>
<div class="a" style="left:68.5px;top:262.6px;width:3.7px;height:1px;background:#cacaca"></div>
<div class="a" style="left:73.0px;top:262.6px;width:3.1px;height:1px;background:#cacaca"></div>
<div class="a" style="left:20.0px;top:264.8px;width:2.8px;height:1px;background:#cacaca"></div>
<div class="a" style="left:23.7px;top:264.8px;width:5.0px;height:1px;background:#cacaca"></div>
<div class="a" style="left:29.6px;top:264.8px;width:6.4px;height:1px;background:#cacaca"></div>
<div class="a" style="left:36.9px;top:264.8px;width:4.7px;height:1px;background:#cacaca"></div>
<div class="a" style="left:42.5px;top:264.8px;width:2.6px;height:1px;background:#e8c8b0"></div>
<div class="a" style="left:46.0px;top:264.8px;width:3.7px;height:1px;background:#cacaca"></div>
<div class="a" style="left:50.6px;top:264.8px;width:1.7px;height:1px;background:#cacaca"></div>
<div class="a" style="left:20.0px;top:267.0px;width:6.5px;height:1px;background:#cacaca"></div>
<div class="a" style="left:27.4px;top:267.0px;width:6.8px;height:1px;background:#cacaca"></div>
<div class="a" style="left:35.1px;top:267.0px;width:7.6px;height:1px;background:#cacaca"></div>
<div class="a" style="left:43.7px;top:267.0px;width:2.1px;height:1px;background:#cacaca"></div>
<div class="a" style="left:20.0px;top:270.6px;width:3.0px;height:1px;background:#cacaca"></div>
<div class="a" style="left:23.9px;top:270.6px;width:7.8px;height:1px;background:#cacaca"></div>
<div class="a" style="left:32.6px;top:270.6px;width:2.5px;height:1px;background:#cacaca"></div>
<div class="a" style="left:36.1px;top:270.6px;width:3.0px;height:1px;background:#cacaca"></div>
<div class="a" style="left:40.0px;top:270.6px;width:2.7px;height:1px;background:#cacaca"></div>
<div class="a" style="left:43.6px;top:270.6px;width:6.1px;height:1px;background:#cacaca"></div>
<div class="a" style="left:50.6px;top:270.6px;width:3.6px;height:1px;background:#e8c8b0"></div>
<div class="a" style="left:55.1px;top:270.6px;width:5.1px;height:1px;background:#cacaca"></div>
<div class="a" style="left:61.1px;top:270.6px;width:7.5px;height:1px;background:#cacaca"></div>
<div class="a" style="left:69.5px;top:270.6px;width:2.7px;height:1px;background:#cacaca"></div>
<div class="a" style="left:73.1px;top:270.6px;width:5.8px;height:1px;background:#cacaca"></div>
<div class="a" style="left:79.9px;top:270.6px;width:2.7px;height:1px;background:#cacaca"></div>
<div class="a" style="left:20.0px;top:274.2px;width:4.3px;height:1px;background:#cacaca"></div>
<div class="a" style="left:25.2px;top:274.2px;width:7.6px;height:1px;background:#cacaca"></div>
<div class="a" style="left:33.7px;top:274.2px;width:6.6px;height:1px;background:#cacaca"></div>
<div class="a" style="left:41.2px;top:274.2px;width:7.1px;height:1px;background:#cacaca"></div>
<div class="a" style="left:49.2px;top:274.2px;width:7.6px;height:1px;background:#cacaca"></div>
<div class="a" style="left:57.7px;top:274.2px;width:4.8px;height:1px;background:#cacaca"></div>
<div class="a" style="left:63.4px;top:274.2px;width:6.8px;height:1px;background:#cacaca"></div>
<div class="a" style="left:71.1px;top:274.2px;width:1.2px;height:1px;background:#cacaca"></div>
<div class="a" style="left:20.0px;top:276.4px;width:4.6px;height:1px;background:#cacaca"></div>
<div class="a" style="left:25.5px;top:276.4px;width:3.3px;height:1px;background:#cacaca"></div>
<div class="a" style="left:29.8px;top:276.4px;width:2.6px;height:1px;background:#cacaca"></div>
<div class="a" style="left:33.3px;top:276.4px;width:6.7px;height:1px;background:#cacaca"></div>
<div class="a" style="left:40.9px;top:276.4px;width:3.0px;height:1px;background:#cacaca"></div>
<div class="a" style="left:44.8px;top:276.4px;width:7.1px;height:1px;background:#cacaca"></div>
<div class="a" style="left:52.8px;top:276.4px;width:7.3px;height:1px;background:#cacaca"></div>
<div class="a" style="left:61.1px;top:276.4px;width:5.0px;height:1px;background:#cacaca"></div>
<div class="a" style="left:67.0px;top:276.4px;width:6.5px;height:1px;background:#cacaca"></div>
<div class="a" style="left:74.4px;top:276.4px;width:4.5px;height:1px;background:#cacaca"></div>
<div class="a" style="left:79.8px;top:276.4px;width:2.3px;height:1px;background:#cacaca"></div>
<div class="a" style="left:20.0px;top:278.6px;width:6.1px;height:1px;background:#cacaca"></div>
<div class="a" style="left:27.0px;top:278.6px;width:2.8px;height:1px;background:#cacaca"></div>
<div class="a" style="left:30.6px;top:278.6px;width:6.0px;height:1px;background:#cacaca"></div>
<div class="a" style="left:37.6px;top:278.6px;width:2.6px;height:1px;background:#cacaca"></div>
<div class="a" style="left:41.0px;top:278.6px;width:5.2px;height:1px;background:#cacaca"></div>
<div class="a" style="left:20.0px;top:280.8px;width:5.8px;height:1px;background:#cacaca"></div>
<div class="a" style="left:26.7px;top:280.8px;width:5.4px;height:1px;background:#cacaca"></div>
<div class="a" style="left:33.1px;top:280.8px;width:3.5px;height:1px;background:#cacaca"></div>
<div class="a" style="left:37.4px;top:280.8px;width:7.0px;height:1px;background:#cacaca"></div>
<div class="a" style="left:45.4px;top:280.8px;width:2.6px;height:1px;background:#e8c8b0"></div>
<div class="a" style="left:48.9px;top:280.8px;width:3.6px;height:1px;background:#cacaca"></div>
<div class="a" style="left:53.4px;top:280.8px;width:3.0px;height:1px;background:#cacaca"></div>
<div class="a" style="left:57.3px;top:280.8px;width:3.7px;height:1px;background:#cacaca"></div>
<div class="a" style="left:61.9px;top:280.8px;width:5.9px;height:1px;background:#cacaca"></div>
<div class="a" style="left:68.7px;top:280.8px;width:6.7px;height:1px;background:#cacaca"></div>
<div class="a" style="left:76.3px;top:280.8px;width:2.1px;height:1px;background:#cacaca"></div>
<div class="a" style="left:20.0px;top:283.0px;width:5.8px;height:1px;background:#cacaca"></div>
<div class="a" style="left:26.7px;top:283.0px;width:3.6px;height:1px;background:#cacaca"></div>
<div class="a" style="left:31.2px;top:283.0px;width:5.1px;height:1px;background:#cacaca"></div>
<div class="a" style="left:37.2px;top:283.0px;width:2.9px;height:1px;background:#cacaca"></div>
<div class="a" style="left:41.0px;top:283.0px;width:5.2px;height:1px;background:#cacaca"></div>
<div class="a" style="left:47.0px;top:283.0px;width:5.5px;height:1px;background:#cacaca"></div>
<div class="a" style="left:53.5px;top:283.0px;width:4.8px;height:1px;background:#cacaca"></div>
<div class="a" style="left:59.2px;top:283.0px;width:5.8px;height:1px;background:#cacaca"></div>
<div class="a" style="left:65.9px;top:283.0px;width:4.4px;height:1px;background:#e8c8b0"></div>
<div class="a" style="left:71.3px;top:283.0px;width:0.9px;height:1px;background:#cacaca"></div>
<div class="a" style="left:16.2px;top:285.3px;width:75.8px;height:7.2px;background:linear-gradient(90deg,#0d1f50 0%,#1a3d8a 20%,#2556a8 40%,#2e5090 55%,#4a7a5a 70%,#6a8a4a 85%,#5a6a50 100%)"></div><div class="a" style="left:18.5px;top:287.3px;width:5.5px;height:3px;background:#f0f0f0"></div><div class="a" style="left:66px;top:286.3px;width:5px;height:5px;border-radius:50%;background:#e8eef8;border:1px solid #3060c0"></div><div class="a" style="left:73.5px;top:286.8px;width:1.5px;height:4px;background:#7ac04a"></div><div class="a" style="left:78px;top:287.8px;width:5px;height:2px;background:#d8e8d0"></div>
<div class="num" style="top:300.5px;color:#c4533a">6</div>
<div class="a" style="left:15px;top:300.7px;width:79.3px;height:45.8px;border:1.3px solid #c4533a;background:#fff"></div>
<div class="a" style="left:16.2px;top:302.0px;width:75.8px;height:4.3px;background:#3a8ad0"></div>
<svg class="a" style="left:16.2px;top:306.3px" width="76" height="32" viewBox="0 0 76 32"><ellipse cx="24" cy="18" rx="17" ry="13" fill="#f2f2f2" stroke="#777" stroke-width="0.4" stroke-dasharray="1 0.6"/><ellipse cx="24.0" cy="5.5" rx="6" ry="3.2" fill="#f2f2f2" stroke="#888" stroke-width="0.4"/><ellipse cx="35.3" cy="9.2" rx="6" ry="3.2" fill="#f2f2f2" stroke="#888" stroke-width="0.4"/><ellipse cx="40.0" cy="18.0" rx="6" ry="3.2" fill="#f2f2f2" stroke="#888" stroke-width="0.4"/><ellipse cx="35.3" cy="26.8" rx="6" ry="3.2" fill="#f2f2f2" stroke="#888" stroke-width="0.4"/><ellipse cx="24.0" cy="30.5" rx="6" ry="3.2" fill="#f2f2f2" stroke="#888" stroke-width="0.4"/><ellipse cx="12.7" cy="26.8" rx="6" ry="3.2" fill="#f2f2f2" stroke="#888" stroke-width="0.4"/><ellipse cx="8.0" cy="18.0" rx="6" ry="3.2" fill="#f2f2f2" stroke="#888" stroke-width="0.4"/><ellipse cx="12.7" cy="9.2" rx="6" ry="3.2" fill="#f2f2f2" stroke="#888" stroke-width="0.4"/><rect x="20" y="17.2" width="8" height="1" fill="#999"/><rect x="5" y="2.2" width="16" height="1.2" fill="#bbb"/><line x1="45" y1="4.5" x2="69" y2="4.5" stroke="#888" stroke-width="0.35"/><line x1="45" y1="6.5" x2="69" y2="6.5" stroke="#888" stroke-width="0.35"/><line x1="45" y1="9" x2="69" y2="9" stroke="#888" stroke-width="0.35"/><line x1="45" y1="10.5" x2="69" y2="10.5" stroke="#888" stroke-width="0.35"/><line x1="45" y1="12" x2="69" y2="12" stroke="#888" stroke-width="0.35"/><line x1="45" y1="16" x2="69" y2="16" stroke="#888" stroke-width="0.35"/><line x1="45" y1="4.5" x2="45" y2="16" stroke="#888" stroke-width="0.35"/><line x1="51" y1="4.5" x2="51" y2="16" stroke="#888" stroke-width="0.35"/><line x1="57" y1="4.5" x2="57" y2="16" stroke="#888" stroke-width="0.35"/><line x1="63" y1="4.5" x2="63" y2="16" stroke="#888" stroke-width="0.35"/><line x1="69" y1="4.5" x2="69" y2="16" stroke="#888" stroke-width="0.35"/></svg>
<div class="a" style="left:16.2px;top:337.8px;width:75.8px;height:7.2px;background:linear-gradient(90deg,#0d1f50 0%,#1a3d8a 20%,#2556a8 40%,#2e5090 55%,#4a7a5a 70%,#6a8a4a 85%,#5a6a50 100%)"></div><div class="a" style="left:18.5px;top:339.8px;width:5.5px;height:3px;background:#f0f0f0"></div><div class="a" style="left:66px;top:338.8px;width:5px;height:5px;border-radius:50%;background:#e8eef8;border:1px solid #3060c0"></div><div class="a" style="left:73.5px;top:339.3px;width:1.5px;height:4px;background:#7ac04a"></div><div class="a" style="left:78px;top:340.3px;width:5px;height:2px;background:#d8e8d0"></div>
<div class="num" style="top:353.1px;color:#777">7</div>
<div class="a" style="left:16.2px;top:354.6px;width:75.8px;height:43px;background:#fff"></div>
<div class="a" style="left:16.2px;top:354.6px;width:75.8px;height:4.3px;background:#3a8ad0"></div>
<div class="a" style="left:20.0px;top:361.1px;width:6.5px;height:1px;background:#cacaca"></div>
<div class="a" style="left:27.4px;top:361.1px;width:7.9px;height:1px;background:#cacaca"></div>
<div class="a" style="left:36.2px;top:361.1px;width:7.6px;height:1px;background:#cacaca"></div>
<div class="a" style="left:44.7px;top:361.1px;width:4.8px;height:1px;background:#cacaca"></div>
<div class="a" style="left:50.4px;top:361.1px;width:7.5px;height:1px;background:#cacaca"></div>
<div class="a" style="left:58.8px;top:361.1px;width:0.2px;height:1px;background:#cacaca"></div>
<div class="a" style="left:20.0px;top:363.3px;width:4.1px;height:1px;background:#cacaca"></div>
<div class="a" style="left:25.0px;top:363.3px;width:3.5px;height:1px;background:#cacaca"></div>
<div class="a" style="left:29.4px;top:363.3px;width:6.5px;height:1px;background:#cacaca"></div>
<div class="a" style="left:36.8px;top:363.3px;width:5.4px;height:1px;background:#cacaca"></div>
<div class="a" style="left:43.1px;top:363.3px;width:2.7px;height:1px;background:#cacaca"></div>
<div class="a" style="left:46.7px;top:363.3px;width:4.0px;height:1px;background:#cacaca"></div>
<div class="a" style="left:51.6px;top:363.3px;width:4.4px;height:1px;background:#cacaca"></div>
<div class="a" style="left:56.9px;top:363.3px;width:6.6px;height:1px;background:#cacaca"></div>
<div class="a" style="left:64.4px;top:363.3px;width:3.1px;height:1px;background:#cacaca"></div>
<div class="a" style="left:68.4px;top:363.3px;width:4.8px;height:1px;background:#cacaca"></div>
<div class="a" style="left:74.0px;top:363.3px;width:3.3px;height:1px;background:#cacaca"></div>
<div class="a" style="left:78.3px;top:363.3px;width:6.4px;height:1px;background:#e8c8b0"></div>
<div class="a" style="left:85.5px;top:363.3px;width:4.4px;height:1px;background:#cacaca"></div>
<div class="a" style="left:20.0px;top:365.5px;width:5.0px;height:1px;background:#cacaca"></div>
<div class="a" style="left:25.9px;top:365.5px;width:5.5px;height:1px;background:#cacaca"></div>
<div class="a" style="left:32.3px;top:365.5px;width:7.2px;height:1px;background:#cacaca"></div>
<div class="a" style="left:40.4px;top:365.5px;width:5.0px;height:1px;background:#cacaca"></div>
<div class="a" style="left:46.4px;top:365.5px;width:6.9px;height:1px;background:#cacaca"></div>
<div class="a" style="left:54.2px;top:365.5px;width:3.8px;height:1px;background:#cacaca"></div>
<div class="a" style="left:58.9px;top:365.5px;width:2.6px;height:1px;background:#cacaca"></div>
<div class="a" style="left:62.4px;top:365.5px;width:5.4px;height:1px;background:#cacaca"></div>
<div class="a" style="left:68.7px;top:365.5px;width:3.4px;height:1px;background:#cacaca"></div>
<div class="a" style="left:73.0px;top:365.5px;width:0.2px;height:1px;background:#cacaca"></div>
<div class="a" style="left:20.0px;top:367.7px;width:7.9px;height:1px;background:#cacaca"></div>
<div class="a" style="left:28.8px;top:367.7px;width:3.5px;height:1px;background:#cacaca"></div>
<div class="a" style="left:33.2px;top:367.7px;width:4.9px;height:1px;background:#cacaca"></div>
<div class="a" style="left:39.0px;top:367.7px;width:2.8px;height:1px;background:#cacaca"></div>
<div class="a" style="left:42.7px;top:367.7px;width:3.0px;height:1px;background:#cacaca"></div>
<div class="a" style="left:46.6px;top:367.7px;width:3.9px;height:1px;background:#cacaca"></div>
<div class="a" style="left:51.3px;top:367.7px;width:4.8px;height:1px;background:#cacaca"></div>
<div class="a" style="left:57.0px;top:367.7px;width:2.7px;height:1px;background:#cacaca"></div>
<div class="a" style="left:60.7px;top:367.7px;width:6.0px;height:1px;background:#cacaca"></div>
<div class="a" style="left:67.5px;top:367.7px;width:7.5px;height:1px;background:#cacaca"></div>
<div class="a" style="left:76.0px;top:367.7px;width:3.9px;height:1px;background:#cacaca"></div>
<div class="a" style="left:80.7px;top:367.7px;width:6.7px;height:1px;background:#cacaca"></div>
<div class="a" style="left:88.3px;top:367.7px;width:1.3px;height:1px;background:#cacaca"></div>
<div class="a" style="left:20.0px;top:369.9px;width:6.0px;height:1px;background:#cacaca"></div>
<div class="a" style="left:26.9px;top:369.9px;width:7.5px;height:1px;background:#cacaca"></div>
<div class="a" style="left:35.3px;top:369.9px;width:6.2px;height:1px;background:#cacaca"></div>
<div class="a" style="left:42.4px;top:369.9px;width:2.9px;height:1px;background:#cacaca"></div>
<div class="a" style="left:20.0px;top:372.1px;width:6.3px;height:1px;background:#e8c8b0"></div>
<div class="a" style="left:27.2px;top:372.1px;width:5.5px;height:1px;background:#cacaca"></div>
<div class="a" style="left:33.6px;top:372.1px;width:4.4px;height:1px;background:#cacaca"></div>
<div class="a" style="left:38.9px;top:372.1px;width:6.9px;height:1px;background:#cacaca"></div>
<div class="a" style="left:46.7px;top:372.1px;width:1.0px;height:1px;background:#cacaca"></div>
<div class="a" style="left:20.0px;top:374.3px;width:7.2px;height:1px;background:#cacaca"></div>
<div class="a" style="left:28.1px;top:374.3px;width:7.6px;height:1px;background:#cacaca"></div>
<div class="a" style="left:36.6px;top:374.3px;width:2.7px;height:1px;background:#cacaca"></div>
<div class="a" style="left:40.2px;top:374.3px;width:5.5px;height:1px;background:#cacaca"></div>
<div class="a" style="left:46.6px;top:374.3px;width:4.0px;height:1px;background:#cacaca"></div>
<div class="a" style="left:51.5px;top:374.3px;width:7.5px;height:1px;background:#cacaca"></div>
<div class="a" style="left:59.9px;top:374.3px;width:6.2px;height:1px;background:#cacaca"></div>
<div class="a" style="left:67.0px;top:374.3px;width:5.3px;height:1px;background:#cacaca"></div>
<div class="a" style="left:73.3px;top:374.3px;width:7.2px;height:1px;background:#cacaca"></div>
<div class="a" style="left:20.0px;top:376.5px;width:7.1px;height:1px;background:#cacaca"></div>
<div class="a" style="left:28.0px;top:376.5px;width:4.0px;height:1px;background:#cacaca"></div>
<div class="a" style="left:32.8px;top:376.5px;width:7.7px;height:1px;background:#cacaca"></div>
<div class="a" style="left:41.4px;top:376.5px;width:4.7px;height:1px;background:#cacaca"></div>
<div class="a" style="left:47.0px;top:376.5px;width:3.2px;height:1px;background:#cacaca"></div>
<div class="a" style="left:20.0px;top:380.1px;width:3.6px;height:1px;background:#cacaca"></div>
<div class="a" style="left:24.5px;top:380.1px;width:5.4px;height:1px;background:#cacaca"></div>
<div class="a" style="left:30.8px;top:380.1px;width:7.1px;height:1px;background:#cacaca"></div>
<div class="a" style="left:38.8px;top:380.1px;width:7.0px;height:1px;background:#cacaca"></div>
<div class="a" style="left:46.7px;top:380.1px;width:4.1px;height:1px;background:#e8c8b0"></div>
<div class="a" style="left:51.7px;top:380.1px;width:2.9px;height:1px;background:#cacaca"></div>
<div class="a" style="left:55.4px;top:380.1px;width:5.2px;height:1px;background:#cacaca"></div>
<div class="a" style="left:61.5px;top:380.1px;width:5.5px;height:1px;background:#cacaca"></div>
<div class="a" style="left:67.9px;top:380.1px;width:3.7px;height:1px;background:#cacaca"></div>
<div class="a" style="left:20.0px;top:382.3px;width:6.2px;height:1px;background:#cacaca"></div>
<div class="a" style="left:27.1px;top:382.3px;width:3.3px;height:1px;background:#cacaca"></div>
<div class="a" style="left:31.3px;top:382.3px;width:6.7px;height:1px;background:#cacaca"></div>
<div class="a" style="left:38.9px;top:382.3px;width:3.5px;height:1px;background:#cacaca"></div>
<div class="a" style="left:43.3px;top:382.3px;width:7.3px;height:1px;background:#cacaca"></div>
<div class="a" style="left:51.5px;top:382.3px;width:7.8px;height:1px;background:#cacaca"></div>
<div class="a" style="left:20.0px;top:384.5px;width:7.9px;height:1px;background:#cacaca"></div>
<div class="a" style="left:28.8px;top:384.5px;width:3.2px;height:1px;background:#cacaca"></div>
<div class="a" style="left:33.0px;top:384.5px;width:3.2px;height:1px;background:#cacaca"></div>
<div class="a" style="left:37.1px;top:384.5px;width:7.5px;height:1px;background:#cacaca"></div>
<div class="a" style="left:45.5px;top:384.5px;width:3.6px;height:1px;background:#cacaca"></div>
<div class="a" style="left:49.9px;top:384.5px;width:8.0px;height:1px;background:#e8c8b0"></div>
<div class="a" style="left:58.8px;top:384.5px;width:3.9px;height:1px;background:#cacaca"></div>
<div class="a" style="left:63.6px;top:384.5px;width:7.7px;height:1px;background:#cacaca"></div>
<div class="a" style="left:20.0px;top:386.7px;width:6.6px;height:1px;background:#cacaca"></div>
<div class="a" style="left:27.5px;top:386.7px;width:5.6px;height:1px;background:#cacaca"></div>
<div class="a" style="left:34.0px;top:386.7px;width:5.5px;height:1px;background:#cacaca"></div>
<div class="a" style="left:40.4px;top:386.7px;width:5.4px;height:1px;background:#cacaca"></div>
<div class="a" style="left:46.7px;top:386.7px;width:3.4px;height:1px;background:#cacaca"></div>
<div class="a" style="left:16.2px;top:390.4px;width:75.8px;height:7.2px;background:linear-gradient(90deg,#0d1f50 0%,#1a3d8a 20%,#2556a8 40%,#2e5090 55%,#4a7a5a 70%,#6a8a4a 85%,#5a6a50 100%)"></div><div class="a" style="left:18.5px;top:392.4px;width:5.5px;height:3px;background:#f0f0f0"></div><div class="a" style="left:66px;top:391.4px;width:5px;height:5px;border-radius:50%;background:#e8eef8;border:1px solid #3060c0"></div><div class="a" style="left:73.5px;top:391.9px;width:1.5px;height:4px;background:#7ac04a"></div><div class="a" style="left:78px;top:392.9px;width:5px;height:2px;background:#d8e8d0"></div>
<!--thumbs-end--></div></div>
<svg class="a" style="left:0;top:331px" width="27" height="27" viewBox="0 331 27 27">
  <circle cx="13.3" cy="344.6" r="12.7" fill="#3a3a3a" opacity="0.85"/>
  <path d="M9 350.5 L10 347 L16.5 340.5 L19 343 L12.5 349.5 Z" fill="#fff"/>
  <path d="M16.8 340.2 L18 339 Q19 338.5 19.8 339.3 Q20.5 340 20 341 L19 342.5 Z" fill="#fff"/>
</svg>

<!-- slide area -->
<div class="a" style="left:113px;top:105px;width:580px;height:248px;background:#fff"></div>
<div class="a" style="left:693px;top:105px;width:7px;height:248px;background:#dcdad9"></div>
<div class="a" style="left:694px;top:107.5px;width:5.5px;height:6px;background:#fff"></div>
<div class="a" style="left:693.6px;top:200px;width:6.4px;height:11px;background:#fff"></div>
<div class="a" style="left:694px;top:331.3px;width:6px;height:5px;background:#fff"></div>
<svg class="a" style="left:693px;top:105px" width="7" height="248" viewBox="693 105 7 248">
  <path d="M695.3 111.3 L696.8 109.5 L698.3 111.3Z" fill="#555"/>
  <path d="M695.3 333 L696.8 334.8 L698.3 333Z" fill="#444"/>
  <path d="M695.3 340.5 L696.8 338.7 L698.3 340.5Z M695.3 342.8 L696.8 341 L698.3 342.8Z" fill="#555"/>
  <path d="M695.3 346.5 L696.8 348.3 L698.3 346.5Z M695.3 348.8 L696.8 350.6 L698.3 348.8Z" fill="#555"/>
</svg>
<div class="a" style="left:113px;top:352.5px;width:587px;height:8px;background:#dcdad9"></div>
<div class="a" style="left:114px;top:353.5px;width:5.5px;height:6px;background:#fff"></div>
<div class="a" style="left:121px;top:353.8px;width:557px;height:6px;background:#fff"></div>
<div class="a" style="left:686px;top:353.8px;width:5.5px;height:6px;background:#fff"></div>
<svg class="a" style="left:113px;top:353px" width="580" height="8" viewBox="113 353 580 8">
  <path d="M117.8 355.3 L116 356.8 L117.8 358.3Z" fill="#555"/>
  <path d="M688 355.3 L689.8 356.8 L688 358.3Z" fill="#444"/>
</svg>

<!-- notes -->
<div class="a" style="left:113px;top:360.5px;width:587px;height:17px;background:#e9e7e6"></div>
<div class="a" style="left:115.7px;top:366.3px;font-size:6.5px;color:#5a5a5a;line-height:8px">Нотатки до слайда</div>

<!-- status bar -->
<div class="a" style="left:0;top:377.5px;width:700px;height:14.3px;background:#f5f2ee"></div>
<div class="a" style="left:6px;top:382.2px;font-size:4.6px;color:#666;line-height:6px">Слайд 6 з 13</div>
<div class="a" style="left:59px;top:382.2px;font-size:4.7px;color:#666;line-height:6px">українська</div>
<div class="a" style="left:456px;top:381.5px;font-size:4.8px;color:#555;line-height:6px">Нотатки</div>
<div class="a" style="left:496px;top:381.5px;font-size:4.8px;color:#555;line-height:6px">Примітки</div>
<div class="a" style="left:527.3px;top:377.5px;width:18.5px;height:14.3px;background:#d6d3d1"></div>
<div class="a" style="left:671px;top:381.5px;font-size:4.8px;color:#666;line-height:6px">50%</div>
<svg class="a" style="left:440px;top:377px" width="260" height="15" viewBox="440 377 260 15">
  <g stroke="#777" stroke-width="0.7" fill="none">
   <path d="M449 384h6 M449 386h6 M449 388h6 M450.5 382.5 L452 381 L453.5 382.5"/>
   <path d="M488.5 381.5h6v4.5h-3.5l-2 1.5v-1.5h-0.5z"/>
   <rect x="533" y="382" width="6" height="5"/>
   <rect x="551.5" y="381.5" width="3" height="2.5"/><rect x="555.5" y="381.5" width="3" height="2.5"/>
   <rect x="551.5" y="385" width="3" height="2.5"/><rect x="555.5" y="385" width="3" height="2.5"/>
   <path d="M590 381.5h6 v3.5 h-6z M593 385 v2 M591 387.5h4"/>
   <path d="M605.5 385h3 M659.5 385h3 M661 383.5v3"/>
   <path d="M690 385 h6 M693 382 v6 M691.5 383.5 L693 382 L694.5 383.5 M691.5 386.5 L693 388 L694.5 386.5"/>
  </g>
  <rect x="534" y="383.5" width="4" height="2" fill="#777"/>
  <rect x="571" y="382" width="7" height="5.5" fill="#888"/>
  <line x1="611" y1="385" x2="658" y2="385" stroke="#bbb" stroke-width="0.5"/>
  <rect x="621.5" y="382" width="1.6" height="6" fill="#666"/>
</svg>

<!-- bottom black area -->
<div class="a" style="left:0.5px;top:393.5px;font-size:8.9px;color:#e0e0e0;line-height:9px">Экран Алла Касич</div>
<svg class="a" style="left:0;top:400px" width="700" height="38" viewBox="0 400 700 38">
  <path d="M231.8 424.6 L239.8 420.4 L239.8 428.9 Z" fill="#bdbdbd"/>
  <circle cx="349.8" cy="425" r="4.1" fill="#bdbdbd"/>
  <rect x="460" y="421" width="8" height="8" fill="#b0b0b0"/>
</svg>

<div id="slide">
<svg class="a" style="left:113px;top:105px" width="580" height="248" viewBox="113 105 580 248">
<ellipse cx="302.8" cy="244.3" rx="124" ry="101.8" fill="#efefef" stroke="#111" stroke-width="1.7" stroke-dasharray="6.5 5.157" stroke-dashoffset="-0.3"/>
<ellipse cx="305" cy="175.9" rx="43.0" ry="22.2" fill="#efefef"/>
<ellipse cx="222" cy="189.8" rx="46.4" ry="22.2" fill="#efefef"/>
<ellipse cx="382.6" cy="194.2" rx="42.9" ry="22.1" fill="#efefef"/>
<ellipse cx="409.2" cy="244.9" rx="52.5" ry="23.1" fill="#efefef"/>
<ellipse cx="379" cy="294.2" rx="43.1" ry="22.0" fill="#efefef"/>
<ellipse cx="302" cy="324.3" rx="42.5" ry="21.8" fill="#efefef"/>
<ellipse cx="219.9" cy="294" rx="43.0" ry="22.1" fill="#efefef"/>
<ellipse cx="193.6" cy="239.9" rx="46.4" ry="23.1" fill="#efefef"/>
<ellipse cx="305" cy="175.9" rx="43.0" ry="22.2" fill="none" stroke="#2a2a2a" stroke-width="1"/>
<ellipse cx="222" cy="189.8" rx="46.4" ry="22.2" fill="none" stroke="#2a2a2a" stroke-width="1"/>
<ellipse cx="382.6" cy="194.2" rx="42.9" ry="22.1" fill="none" stroke="#2a2a2a" stroke-width="1"/>
<ellipse cx="409.2" cy="244.9" rx="52.5" ry="23.1" fill="none" stroke="#2a2a2a" stroke-width="1"/>
<ellipse cx="379" cy="294.2" rx="43.1" ry="22.0" fill="none" stroke="#2a2a2a" stroke-width="1"/>
<ellipse cx="302" cy="324.3" rx="42.5" ry="21.8" fill="none" stroke="#2a2a2a" stroke-width="1"/>
<ellipse cx="219.9" cy="294" rx="43.0" ry="22.1" fill="none" stroke="#2a2a2a" stroke-width="1"/>
<ellipse cx="193.6" cy="239.9" rx="46.4" ry="23.1" fill="none" stroke="#2a2a2a" stroke-width="1"/>
<g font-family="Liberation Serif" font-size="6.85" fill="#2e2834" stroke="#2e2834" stroke-width="0.12" text-anchor="middle">
<text x="305" y="170.5">Розумне</text>
<text x="305" y="178.1">будівництво</text>
<text x="305" y="185.7">(Smart Building)</text>
<text x="222.5" y="184.4">Хмарні</text>
<text x="222.5" y="192.0">обчислення</text>
<text x="222.5" y="199.6">(Cloud Computing)</text>
<text x="382.6" y="192.6">Аналіз даних</text>
<text x="382.6" y="200.2">(Data Analytics)</text>
<text x="406.5" y="243.3">Спрямована інтеграція</text>
<text x="406.5" y="250.9">(Directional Integration)</text>
<text x="379" y="288.8">Смарт</text>
<text x="379" y="296.4">вимірювання</text>
<text x="379" y="304.0">(Smart Metering)</text>
<text x="302" y="322.7">Робототехніка</text>
<text x="302" y="330.3">(Robotics)</text>
<text x="220" y="292.4">Кібербезпека</text>
<text x="220" y="300.0">(Cyber Security)</text>
<text x="194.2" y="234.5">Розумні транспортні</text>
<text x="194.2" y="242.1">засоби (Smart</text>
<text x="194.2" y="249.7">Vehicles)</text>
</g>
<text x="155.7" y="118.4" font-family="Liberation Serif" font-weight="bold" font-size="11.5" fill="#111" stroke="#111" stroke-width="0.25">Складники Індустрії 4.0</text>
<text x="276.5" y="244.6" font-family="Liberation Serif" font-weight="bold" font-size="10" fill="#111">Індустрія 4.0</text>
<path d="M400.5 238.5 h3 M402 238.5 v8.5 M400.5 247 h3" stroke="#222" stroke-width="0.6" fill="none"/>
<g stroke="#444" stroke-width="0.9">
<line x1="451.5" y1="132.5" x2="451.5" y2="211.3"/>
<line x1="509.7" y1="132.5" x2="509.7" y2="211.3"/>
<line x1="568.8" y1="132.5" x2="568.8" y2="211.3"/>
<line x1="626.7" y1="132.5" x2="626.7" y2="211.3"/>
<line x1="685" y1="132.5" x2="685" y2="211.3"/>
<line x1="451.5" y1="132.5" x2="685" y2="132.5"/>
<line x1="451.5" y1="140.5" x2="685" y2="140.5"/>
<line x1="451.5" y1="156.4" x2="685" y2="156.4"/>
<line x1="451.5" y1="171.6" x2="685" y2="171.6"/>
<line x1="451.5" y1="179.3" x2="685" y2="179.3"/>
<line x1="451.5" y1="187.5" x2="685" y2="187.5"/>
<line x1="451.5" y1="211.3" x2="685" y2="211.3"/>
</g>
<g font-family="Liberation Serif" font-size="5.7" fill="#222">
<text x="453.8" y="139" font-weight="bold">Індустрія 1.0</text>
<text x="512.0" y="139" font-weight="bold">Індустрія 2.0</text>
<text x="571.1" y="139" font-weight="bold">Індустрія 3.0</text>
<text x="629.0" y="139" font-weight="bold">Індустрія 4.0</text>
<text x="453.8" y="147" font-weight="bold">1760-1840</text>
<text x="512.0" y="147" font-weight="bold">1870-1914</text>
<text x="571.1" y="147" font-weight="bold">1940-теперішній час</text>
<text x="629.0" y="147" font-weight="bold">2015 – теперішній</text>
<text x="629.0" y="154.4" font-weight="bold">час</text>
<text x="453.8" y="162.6">Механізація</text>
<text x="512.0" y="162.6">Масове виробництво</text>
<text x="571.1" y="162.6">Автоматизація</text>
<text x="629.0" y="162.6">Кібер-фізичні</text>
<text x="629.0" y="170">системи</text>
<text x="453.8" y="177.7">Паровий двигун</text>
<text x="512.0" y="177.7">Складальні лінії</text>
<text x="571.1" y="177.7">Комп`ютери</text>
<text x="629.0" y="177.7">IoT</text>
<text x="453.8" y="185.7">Ткацький верстат</text>
<text x="512.0" y="185.7">Електрична енергія</text>
<text x="571.1" y="185.7">Електроніка</text>
<text x="629.0" y="185.7">Мережі</text>
<text x="453.8" y="194.4">Перший</text>
<text x="507.7" y="194.4" text-anchor="end">механічний</text>
<text x="453.8" y="202">ткацький</text>
<text x="507.7" y="202" text-anchor="end">верстат</text>
<text x="453.8" y="209.5">1784 року</text>
<text x="512.0" y="194.4">Перша</text>
<text x="566.8" y="194.4" text-anchor="end">конвеєрна</text>
<text x="512.0" y="202">лінія 1870 року</text>
<text x="571.1" y="194.4">Перший</text>
<text x="624.7" y="194.4" text-anchor="end">програмо-</text>
<text x="571.1" y="202">ваний</text>
<text x="624.7" y="202" text-anchor="end">логічний</text>
<text x="571.1" y="209.5">контролер 1969 року</text>
</g>
<circle cx="597" cy="129" r="0.5" fill="#555"/>
</svg>
</div>
<div id="video"></div>
<svg class="a" style="left:531px;top:8px" width="161" height="91" viewBox="531 8 161 91">
<defs>
<clipPath id="vc"><rect x="531.6" y="8.2" width="159.4" height="89.8" rx="3.5"/></clipPath>
<radialGradient id="bg" cx="0.7" cy="0.55" r="0.8"><stop offset="0" stop-color="#1a3068"/><stop offset="0.5" stop-color="#142350"/><stop offset="1" stop-color="#0e1632"/></radialGradient>
<radialGradient id="glow" cx="0.5" cy="0.5" r="0.5"><stop offset="0.9" stop-color="#3aa0ff" stop-opacity="0"/><stop offset="0.975" stop-color="#7fd0ff" stop-opacity="0.9"/><stop offset="1" stop-color="#2a70d0" stop-opacity="0"/></radialGradient>
<radialGradient id="earth" cx="0.5" cy="0.5" r="0.5"><stop offset="0" stop-color="#0e1628"/><stop offset="0.8" stop-color="#172544"/><stop offset="0.94" stop-color="#20386a"/><stop offset="0.985" stop-color="#4a9ae8"/><stop offset="1" stop-color="#c0f0ff"/></radialGradient>
<radialGradient id="hair" cx="0.45" cy="0.4" r="0.6"><stop offset="0" stop-color="#c4c0b6"/><stop offset="0.65" stop-color="#aaa69a"/><stop offset="1" stop-color="#857f72"/></radialGradient>
<radialGradient id="face" cx="0.45" cy="0.4" r="0.65"><stop offset="0" stop-color="#ecc2b4"/><stop offset="0.65" stop-color="#dba898"/><stop offset="1" stop-color="#b07a6a"/></radialGradient>
</defs>
<g clip-path="url(#vc)">
<rect x="531" y="8" width="161" height="91" fill="url(#bg)"/>
<circle cx="583.2" cy="18.2" r="0.36" fill="#9fb8e0" opacity="0.34"/>
<circle cx="616.7" cy="31.3" r="0.21" fill="#9fb8e0" opacity="0.55"/>
<circle cx="537.9" cy="35.5" r="0.22" fill="#9fb8e0" opacity="0.35"/>
<circle cx="599.1" cy="59.4" r="0.23" fill="#9fb8e0" opacity="0.41"/>
<circle cx="631.1" cy="66.8" r="0.34" fill="#9fb8e0" opacity="0.50"/>
<circle cx="686.2" cy="11.8" r="0.41" fill="#9fb8e0" opacity="0.44"/>
<circle cx="554.8" cy="16.2" r="0.28" fill="#9fb8e0" opacity="0.71"/>
<circle cx="560.6" cy="44.5" r="0.36" fill="#9fb8e0" opacity="0.49"/>
<circle cx="618.5" cy="12.8" r="0.21" fill="#9fb8e0" opacity="0.40"/>
<circle cx="639.5" cy="35.1" r="0.28" fill="#9fb8e0" opacity="0.59"/>
<circle cx="603.6" cy="27.3" r="0.40" fill="#9fb8e0" opacity="0.65"/>
<circle cx="570.6" cy="44.0" r="0.33" fill="#9fb8e0" opacity="0.74"/>
<circle cx="647.3" cy="26.6" r="0.45" fill="#9fb8e0" opacity="0.36"/>
<circle cx="598.1" cy="55.2" r="0.24" fill="#9fb8e0" opacity="0.54"/>
<circle cx="538.2" cy="49.8" r="0.39" fill="#9fb8e0" opacity="0.59"/>
<circle cx="670.3" cy="28.1" r="0.37" fill="#9fb8e0" opacity="0.60"/>
<circle cx="623.6" cy="36.8" r="0.41" fill="#9fb8e0" opacity="0.77"/>
<circle cx="606.9" cy="49.5" r="0.22" fill="#9fb8e0" opacity="0.65"/>
<circle cx="634.2" cy="69.6" r="0.41" fill="#9fb8e0" opacity="0.44"/>
<circle cx="593.0" cy="49.8" r="0.21" fill="#9fb8e0" opacity="0.53"/>
<circle cx="558.6" cy="16.1" r="0.21" fill="#9fb8e0" opacity="0.68"/>
<circle cx="552.4" cy="24.1" r="0.30" fill="#9fb8e0" opacity="0.74"/>
<circle cx="544.7" cy="36.4" r="0.34" fill="#9fb8e0" opacity="0.74"/>
<circle cx="661.4" cy="61.7" r="0.27" fill="#9fb8e0" opacity="0.51"/>
<circle cx="588.7" cy="62.9" r="0.44" fill="#9fb8e0" opacity="0.38"/>
<circle cx="559.8" cy="23.1" r="0.26" fill="#9fb8e0" opacity="0.54"/>
<circle cx="625.1" cy="25.0" r="0.20" fill="#9fb8e0" opacity="0.51"/>
<circle cx="590.3" cy="43.5" r="0.44" fill="#9fb8e0" opacity="0.65"/>
<circle cx="613.4" cy="46.7" r="0.37" fill="#9fb8e0" opacity="0.33"/>
<circle cx="674.1" cy="56.6" r="0.42" fill="#9fb8e0" opacity="0.70"/>
<circle cx="594.0" cy="33.3" r="0.23" fill="#9fb8e0" opacity="0.62"/>
<circle cx="541.8" cy="13.1" r="0.25" fill="#9fb8e0" opacity="0.38"/>
<circle cx="585.7" cy="12.2" r="0.20" fill="#9fb8e0" opacity="0.38"/>
<circle cx="548.0" cy="31.2" r="0.21" fill="#9fb8e0" opacity="0.74"/>
<circle cx="629.0" cy="18.1" r="0.26" fill="#9fb8e0" opacity="0.47"/>
<circle cx="589.5" cy="16.5" r="0.41" fill="#9fb8e0" opacity="0.80"/>
<circle cx="605.6" cy="38.5" r="0.22" fill="#9fb8e0" opacity="0.35"/>
<circle cx="586.1" cy="25.2" r="0.41" fill="#9fb8e0" opacity="0.38"/>
<circle cx="535.6" cy="67.0" r="0.33" fill="#9fb8e0" opacity="0.37"/>
<circle cx="617.8" cy="10.6" r="0.33" fill="#9fb8e0" opacity="0.79"/>
<circle cx="668.4" cy="51.5" r="0.27" fill="#9fb8e0" opacity="0.48"/>
<circle cx="558.4" cy="56.1" r="0.33" fill="#9fb8e0" opacity="0.69"/>
<circle cx="584.1" cy="22.6" r="0.40" fill="#9fb8e0" opacity="0.79"/>
<circle cx="666.7" cy="58.2" r="0.40" fill="#9fb8e0" opacity="0.67"/>
<circle cx="567.8" cy="40.6" r="0.29" fill="#9fb8e0" opacity="0.31"/>
<circle cx="536.4" cy="26.0" r="0.26" fill="#9fb8e0" opacity="0.65"/>
<circle cx="683.1" cy="36.3" r="0.43" fill="#9fb8e0" opacity="0.79"/>
<circle cx="682.9" cy="31.2" r="0.26" fill="#9fb8e0" opacity="0.41"/>
<circle cx="563.1" cy="21.5" r="0.36" fill="#9fb8e0" opacity="0.75"/>
<circle cx="664.8" cy="38.2" r="0.36" fill="#9fb8e0" opacity="0.70"/>
<circle cx="545.4" cy="49.3" r="0.43" fill="#9fb8e0" opacity="0.69"/>
<circle cx="650.5" cy="38.2" r="0.24" fill="#9fb8e0" opacity="0.69"/>
<circle cx="584.5" cy="57.9" r="0.44" fill="#9fb8e0" opacity="0.50"/>
<circle cx="595.4" cy="66.8" r="0.38" fill="#9fb8e0" opacity="0.39"/>
<circle cx="552.1" cy="18.2" r="0.43" fill="#9fb8e0" opacity="0.70"/>
<circle cx="555.1" cy="59.4" r="0.45" fill="#9fb8e0" opacity="0.63"/>
<circle cx="587.4" cy="42.5" r="0.23" fill="#9fb8e0" opacity="0.31"/>
<circle cx="685.4" cy="48.6" r="0.33" fill="#9fb8e0" opacity="0.77"/>
<circle cx="600.5" cy="62.2" r="0.41" fill="#9fb8e0" opacity="0.41"/>
<circle cx="571.8" cy="26.9" r="0.26" fill="#9fb8e0" opacity="0.59"/>
<circle cx="677" cy="47" r="1" fill="#dde8ff"/><ellipse cx="643" cy="53" rx="6" ry="1.5" fill="#e0f4ff" opacity="0.7"/>
<circle cx="641" cy="167" r="119" fill="#3a80e0" opacity="0.12"/><circle cx="641" cy="167" r="116" fill="#60b0f8" opacity="0.35"/>
<circle cx="641" cy="167" r="114.5" fill="url(#earth)"/>
<circle cx="639.6" cy="77.1" r="0.37" fill="#b8a080" opacity="0.66"/>
<circle cx="646.1" cy="78.5" r="0.59" fill="#b8a080" opacity="0.66"/>
<circle cx="650.6" cy="95.0" r="0.55" fill="#b8a080" opacity="0.51"/>
<circle cx="657.6" cy="62.7" r="0.52" fill="#b8a080" opacity="0.37"/>
<circle cx="622.3" cy="90.8" r="0.39" fill="#b8a080" opacity="0.49"/>
<circle cx="671.3" cy="82.0" r="0.46" fill="#b8a080" opacity="0.51"/>
<circle cx="659.8" cy="90.2" r="0.35" fill="#b8a080" opacity="0.52"/>
<circle cx="638.9" cy="72.0" r="0.69" fill="#b8a080" opacity="0.50"/>
<circle cx="660.2" cy="89.4" r="0.76" fill="#b8a080" opacity="0.48"/>
<circle cx="663.7" cy="80.2" r="0.56" fill="#b8a080" opacity="0.58"/>
<circle cx="652.8" cy="81.2" r="0.54" fill="#b8a080" opacity="0.68"/>
<circle cx="669.5" cy="93.6" r="0.77" fill="#b8a080" opacity="0.40"/>
<circle cx="660.0" cy="96.0" r="0.72" fill="#b8a080" opacity="0.35"/>
<circle cx="630.3" cy="77.9" r="0.34" fill="#b8a080" opacity="0.40"/>
<circle cx="627.0" cy="86.1" r="0.69" fill="#b8a080" opacity="0.66"/>
<circle cx="632.5" cy="87.8" r="0.63" fill="#b8a080" opacity="0.36"/>
<circle cx="682.0" cy="96.8" r="0.41" fill="#b8a080" opacity="0.68"/>
<circle cx="649.1" cy="79.5" r="0.79" fill="#b8a080" opacity="0.63"/>
<circle cx="633.0" cy="77.5" r="0.56" fill="#b8a080" opacity="0.44"/>
<circle cx="635.3" cy="73.5" r="0.66" fill="#b8a080" opacity="0.31"/>
<circle cx="659.7" cy="77.9" r="0.31" fill="#b8a080" opacity="0.43"/>
<circle cx="664.4" cy="80.4" r="0.33" fill="#b8a080" opacity="0.69"/>
<circle cx="675.6" cy="97.0" r="0.35" fill="#b8a080" opacity="0.41"/>
<circle cx="624.7" cy="90.0" r="0.44" fill="#b8a080" opacity="0.35"/>
<circle cx="650.7" cy="94.8" r="0.71" fill="#b8a080" opacity="0.40"/>
<circle cx="632.2" cy="95.1" r="0.59" fill="#b8a080" opacity="0.58"/>
<circle cx="628.1" cy="64.1" r="0.64" fill="#b8a080" opacity="0.47"/>
<circle cx="626.9" cy="95.8" r="0.62" fill="#b8a080" opacity="0.62"/>
<circle cx="627.7" cy="92.8" r="0.33" fill="#b8a080" opacity="0.65"/>
<circle cx="652.9" cy="74.2" r="0.58" fill="#b8a080" opacity="0.67"/>
<circle cx="640.2" cy="66.7" r="0.56" fill="#b8a080" opacity="0.40"/>
<circle cx="629.4" cy="67.8" r="0.33" fill="#b8a080" opacity="0.38"/>
<circle cx="643.2" cy="73.0" r="0.68" fill="#b8a080" opacity="0.42"/>
<circle cx="656.0" cy="68.4" r="0.47" fill="#b8a080" opacity="0.31"/>
<circle cx="639.0" cy="62.6" r="0.67" fill="#b8a080" opacity="0.52"/>
<circle cx="634.9" cy="79.1" r="0.77" fill="#b8a080" opacity="0.34"/>
<circle cx="677.7" cy="77.6" r="0.55" fill="#b8a080" opacity="0.63"/>
<circle cx="648.7" cy="80.2" r="0.64" fill="#b8a080" opacity="0.69"/>
<circle cx="645.3" cy="92.0" r="0.65" fill="#b8a080" opacity="0.55"/>
<circle cx="649.5" cy="74.5" r="0.33" fill="#b8a080" opacity="0.35"/>
<circle cx="626.8" cy="88.7" r="0.43" fill="#b8a080" opacity="0.37"/>
<circle cx="627.7" cy="92.3" r="0.74" fill="#b8a080" opacity="0.57"/>
<circle cx="641.2" cy="70.7" r="0.45" fill="#b8a080" opacity="0.48"/>
<circle cx="632.7" cy="78.0" r="0.43" fill="#b8a080" opacity="0.68"/>
<circle cx="688.1" cy="81.7" r="0.42" fill="#b8a080" opacity="0.69"/>
<path d="M556 98 L563 88 Q572 80 586 77 L612 76 Q634 79 642 88 L652 98 Z" fill="#1a1f2a"/>
<path d="M566 98 L571 87 L584 80 L589 98 Z" fill="#4c5565" opacity="0.75"/>
<path d="M626 98 L620 82 L636 85 L646 98 Z" fill="#5c6576" opacity="0.65"/>
<path d="M584 98 L586 90 Q598 95 612 89 L614 98 Z" fill="#6e2a32"/>
<path d="M586 64 L585 78 Q586 90 598 92 Q611 90 613 78 L614 64 Z" fill="#d4a090"/>
<path d="M584 77 Q587 93 598 95 Q609 93 614 77" stroke="#ece8e4" stroke-width="1.3" fill="none" stroke-dasharray="1 0.35"/>
<path d="M577 54 Q573 32 582 19 Q595 8 610 10.5 Q627 15 628 34 Q629 48 622 56 L578 58 Z" fill="url(#hair)"/>
<path d="M579 44 Q578 30 592 27 Q610 25 619 36 Q621 50 618 62 Q612 76 598 79.5 Q585 77 580 63 Q578 55 579 44 Z" fill="url(#face)"/>
<path d="M578 50 Q576 30 589 21 Q606 13 622 25 Q627 34 623 46 Q618 34 606 30 Q594 29 586 35 Q581 41 579 50 Z" fill="url(#hair)"/>
<path d="M577 54 Q575 44 578.5 36 L581 50 Z" fill="#7a7064" opacity="0.7"/><path d="M622 56 Q628 46 626 34 L621 46 Z" fill="#7a7064" opacity="0.6"/>
<g fill="none" stroke="#7a7068" stroke-width="0.8"><path d="M580 46.5 Q588 45 596 46.5 Q597 54 592 57 Q583 58 581 53 Z"/><path d="M602 46.5 Q611 45 618 46.5 Q618 55 612 57 Q604 57 602 52 Z"/><path d="M596 47.5 Q599 46 602 47.5"/></g>
<ellipse cx="588" cy="51" rx="3" ry="1.3" fill="#6a4848" opacity="0.55"/><ellipse cx="610" cy="51" rx="3" ry="1.3" fill="#6a4848" opacity="0.55"/>
<path d="M598 50 Q596 58 598 61" stroke="#b07868" stroke-width="0.8" fill="none" opacity="0.6"/>
<ellipse cx="592" cy="67.5" rx="5.5" ry="2.2" fill="#a85a58"/>
<ellipse cx="592" cy="67.3" rx="3.8" ry="0.9" fill="#5a3030"/>
<rect x="534.5" y="86" width="43" height="10.5" rx="1.5" fill="#1e1e1e" opacity="0.75"/>
<text x="538" y="94" font-family="Liberation Sans" font-size="6.6" fill="#f0f0f0">Алла Касич</text>
</g></svg>
<!--video-end-->
</body></html>
